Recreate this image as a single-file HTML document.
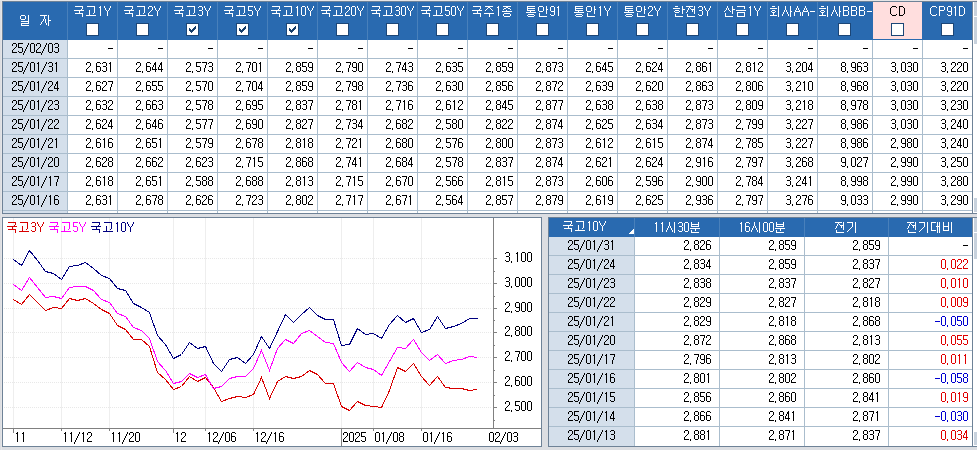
<!DOCTYPE html>
<html><head><meta charset="utf-8"><title>국고채 금리</title>
<style>html,body{margin:0;padding:0;background:#dcdee2;overflow:hidden;font-family:"Liberation Sans",sans-serif}svg{display:block;position:absolute;left:0;top:0}#t{position:absolute;left:0;top:0;width:977px;height:450px;overflow:hidden}#t span{position:absolute;font-size:11px;line-height:13px;white-space:pre;color:transparent}</style>
</head><body>
<svg width="977" height="450" viewBox="0 0 977 450" shape-rendering="crispEdges">
<defs><path id="cm" d="M0 9h1v1h-1zM0 10h1v1h-1z"/><path id="dash" d="M0 5h5v1h-5z"/><path id="sl" d="M4 0h1v1h-1zM4 1h1v1h-1zM3 2h1v1h-1zM3 3h1v1h-1zM2 4h1v1h-1zM2 5h1v1h-1zM1 6h1v1h-1zM1 7h1v1h-1zM0 8h1v1h-1zM0 9h1v1h-1zM-1 10h1v1h-1zM-1 11h1v1h-1z"/><path id="u0030" d="M1 0h3v1h-3zM0 1h1v1h-1zM4 1h1v1h-1zM0 2h1v1h-1zM4 2h1v1h-1zM0 3h1v1h-1zM4 3h1v1h-1zM0 4h1v1h-1zM4 4h1v1h-1zM0 5h1v1h-1zM4 5h1v1h-1zM0 6h1v1h-1zM4 6h1v1h-1zM0 7h1v1h-1zM4 7h1v1h-1zM0 8h1v1h-1zM4 8h1v1h-1zM1 9h3v1h-3z"/><path id="u0031" d="M2 0h1v1h-1zM1 1h2v1h-2zM2 2h1v1h-1zM2 3h1v1h-1zM2 4h1v1h-1zM2 5h1v1h-1zM2 6h1v1h-1zM2 7h1v1h-1zM2 8h1v1h-1zM2 9h1v1h-1z"/><path id="u0032" d="M1 0h3v1h-3zM0 1h1v1h-1zM4 1h1v1h-1zM0 2h1v1h-1zM4 2h1v1h-1zM4 3h1v1h-1zM3 4h1v1h-1zM2 5h1v1h-1zM1 6h1v1h-1zM0 7h1v1h-1zM0 8h1v1h-1zM0 9h5v1h-5z"/><path id="u0033" d="M1 0h3v1h-3zM0 1h1v1h-1zM4 1h1v1h-1zM4 2h1v1h-1zM4 3h1v1h-1zM1 4h3v1h-3zM4 5h1v1h-1zM4 6h1v1h-1zM4 7h1v1h-1zM0 8h1v1h-1zM4 8h1v1h-1zM1 9h3v1h-3z"/><path id="u0034" d="M3 0h1v1h-1zM2 1h2v1h-2zM2 2h2v1h-2zM1 3h1v1h-1zM3 3h1v1h-1zM1 4h1v1h-1zM3 4h1v1h-1zM0 5h1v1h-1zM3 5h1v1h-1zM0 6h1v1h-1zM3 6h1v1h-1zM0 7h5v1h-5zM3 8h1v1h-1zM3 9h1v1h-1z"/><path id="u0035" d="M0 0h5v1h-5zM0 1h1v1h-1zM0 2h1v1h-1zM0 3h1v1h-1zM0 4h4v1h-4zM4 5h1v1h-1zM4 6h1v1h-1zM4 7h1v1h-1zM0 8h1v1h-1zM4 8h1v1h-1zM1 9h3v1h-3z"/><path id="u0036" d="M1 0h3v1h-3zM0 1h1v1h-1zM4 1h1v1h-1zM0 2h1v1h-1zM0 3h1v1h-1zM0 4h4v1h-4zM0 5h1v1h-1zM4 5h1v1h-1zM0 6h1v1h-1zM4 6h1v1h-1zM0 7h1v1h-1zM4 7h1v1h-1zM0 8h1v1h-1zM4 8h1v1h-1zM1 9h3v1h-3z"/><path id="u0037" d="M0 0h5v1h-5zM4 1h1v1h-1zM4 2h1v1h-1zM3 3h1v1h-1zM3 4h1v1h-1zM3 5h1v1h-1zM2 6h1v1h-1zM2 7h1v1h-1zM2 8h1v1h-1zM2 9h1v1h-1z"/><path id="u0038" d="M1 0h3v1h-3zM0 1h1v1h-1zM4 1h1v1h-1zM0 2h1v1h-1zM4 2h1v1h-1zM0 3h1v1h-1zM4 3h1v1h-1zM1 4h3v1h-3zM0 5h1v1h-1zM4 5h1v1h-1zM0 6h1v1h-1zM4 6h1v1h-1zM0 7h1v1h-1zM4 7h1v1h-1zM0 8h1v1h-1zM4 8h1v1h-1zM1 9h3v1h-3z"/><path id="u0039" d="M1 0h3v1h-3zM0 1h1v1h-1zM4 1h1v1h-1zM0 2h1v1h-1zM4 2h1v1h-1zM0 3h1v1h-1zM4 3h1v1h-1zM0 4h1v1h-1zM4 4h1v1h-1zM1 5h4v1h-4zM4 6h1v1h-1zM4 7h1v1h-1zM0 8h1v1h-1zM4 8h1v1h-1zM1 9h3v1h-3z"/><path id="u0041" d="M3 0h1v1h-1zM3 1h1v1h-1zM2 2h1v1h-1zM4 2h1v1h-1zM2 3h1v1h-1zM4 3h1v1h-1zM1 4h1v1h-1zM5 4h1v1h-1zM1 5h5v1h-5zM0 6h1v1h-1zM6 6h1v1h-1zM0 7h1v1h-1zM6 7h1v1h-1zM0 8h1v1h-1zM6 8h1v1h-1zM0 9h1v1h-1zM6 9h1v1h-1z"/><path id="u0042" d="M0 0h5v1h-5zM0 1h1v1h-1zM5 1h1v1h-1zM0 2h1v1h-1zM5 2h1v1h-1zM0 3h1v1h-1zM5 3h1v1h-1zM0 4h5v1h-5zM0 5h1v1h-1zM5 5h1v1h-1zM0 6h1v1h-1zM5 6h1v1h-1zM0 7h1v1h-1zM5 7h1v1h-1zM0 8h1v1h-1zM5 8h1v1h-1zM0 9h5v1h-5z"/><path id="u0043" d="M2 0h4v1h-4zM1 1h1v1h-1zM6 1h1v1h-1zM0 2h1v1h-1zM0 3h1v1h-1zM0 4h1v1h-1zM0 5h1v1h-1zM0 6h1v1h-1zM0 7h1v1h-1zM1 8h1v1h-1zM6 8h1v1h-1zM2 9h4v1h-4z"/><path id="u0044" d="M0 0h4v1h-4zM0 1h1v1h-1zM4 1h1v1h-1zM0 2h1v1h-1zM5 2h1v1h-1zM0 3h1v1h-1zM5 3h1v1h-1zM0 4h1v1h-1zM5 4h1v1h-1zM0 5h1v1h-1zM5 5h1v1h-1zM0 6h1v1h-1zM5 6h1v1h-1zM0 7h1v1h-1zM5 7h1v1h-1zM0 8h1v1h-1zM4 8h1v1h-1zM0 9h4v1h-4z"/><path id="u0050" d="M0 0h5v1h-5zM0 1h1v1h-1zM5 1h1v1h-1zM0 2h1v1h-1zM5 2h1v1h-1zM0 3h1v1h-1zM5 3h1v1h-1zM0 4h5v1h-5zM0 5h1v1h-1zM0 6h1v1h-1zM0 7h1v1h-1zM0 8h1v1h-1zM0 9h1v1h-1z"/><path id="u0059" d="M0 0h1v1h-1zM6 0h1v1h-1zM0 1h1v1h-1zM6 1h1v1h-1zM1 2h1v1h-1zM5 2h1v1h-1zM1 3h1v1h-1zM5 3h1v1h-1zM2 4h1v1h-1zM4 4h1v1h-1zM3 5h1v1h-1zM3 6h1v1h-1zM3 7h1v1h-1zM3 8h1v1h-1zM3 9h1v1h-1z"/><path id="uace0" d="M1 0h8v1h-8zM8 1h1v1h-1zM8 2h1v1h-1zM8 3h1v1h-1zM3 4h1v1h-1zM8 4h1v1h-1zM3 5h1v1h-1zM8 5h1v1h-1zM3 6h1v1h-1zM8 6h1v1h-1zM3 7h1v1h-1zM7 7h1v1h-1zM3 8h1v1h-1zM0 9h10v1h-10z"/><path id="uad6d" d="M1 0h8v1h-8zM8 1h1v1h-1zM8 2h1v1h-1zM7 3h1v1h-1zM0 4h10v1h-10zM5 5h1v1h-1zM5 6h1v1h-1zM1 7h8v1h-8zM8 8h1v1h-1zM8 9h1v1h-1zM8 10h1v1h-1z"/><path id="uae08" d="M1 0h8v1h-8zM8 1h1v1h-1zM8 2h1v1h-1zM0 4h10v1h-10zM1 6h8v1h-8zM1 7h1v1h-1zM8 7h1v1h-1zM1 8h1v1h-1zM8 8h1v1h-1zM1 9h1v1h-1zM8 9h1v1h-1zM1 10h8v1h-8z"/><path id="uae30" d="M0 0h6v1h-6zM8 0h1v1h-1zM5 1h1v1h-1zM8 1h1v1h-1zM5 2h1v1h-1zM8 2h1v1h-1zM5 3h1v1h-1zM8 3h1v1h-1zM5 4h1v1h-1zM8 4h1v1h-1zM4 5h1v1h-1zM8 5h1v1h-1zM3 6h1v1h-1zM8 6h1v1h-1zM2 7h1v1h-1zM8 7h1v1h-1zM1 8h1v1h-1zM8 8h1v1h-1zM0 9h1v1h-1zM8 9h1v1h-1zM8 10h1v1h-1z"/><path id="ub300" d="M0 0h5v1h-5zM6 0h1v1h-1zM8 0h1v1h-1zM0 1h1v1h-1zM6 1h1v1h-1zM8 1h1v1h-1zM0 2h1v1h-1zM6 2h1v1h-1zM8 2h1v1h-1zM0 3h1v1h-1zM6 3h1v1h-1zM8 3h1v1h-1zM0 4h1v1h-1zM5 4h4v1h-4zM0 5h1v1h-1zM6 5h1v1h-1zM8 5h1v1h-1zM0 6h1v1h-1zM6 6h1v1h-1zM8 6h1v1h-1zM0 7h1v1h-1zM6 7h1v1h-1zM8 7h1v1h-1zM0 8h5v1h-5zM6 8h1v1h-1zM8 8h1v1h-1zM6 9h1v1h-1zM8 9h1v1h-1zM6 10h1v1h-1zM8 10h1v1h-1z"/><path id="ubd84" d="M1 0h1v1h-1zM8 0h1v1h-1zM1 1h1v1h-1zM8 1h1v1h-1zM1 2h8v1h-8zM1 3h1v1h-1zM8 3h1v1h-1zM1 4h8v1h-8zM0 6h10v1h-10zM5 7h1v1h-1zM1 8h1v1h-1zM5 8h1v1h-1zM1 9h1v1h-1zM1 10h8v1h-8z"/><path id="ube44" d="M0 0h1v1h-1zM5 0h1v1h-1zM8 0h1v1h-1zM0 1h1v1h-1zM5 1h1v1h-1zM8 1h1v1h-1zM0 2h1v1h-1zM5 2h1v1h-1zM8 2h1v1h-1zM0 3h1v1h-1zM5 3h1v1h-1zM8 3h1v1h-1zM0 4h6v1h-6zM8 4h1v1h-1zM0 5h1v1h-1zM5 5h1v1h-1zM8 5h1v1h-1zM0 6h1v1h-1zM5 6h1v1h-1zM8 6h1v1h-1zM0 7h1v1h-1zM5 7h1v1h-1zM8 7h1v1h-1zM0 8h6v1h-6zM8 8h1v1h-1zM8 9h1v1h-1zM8 10h1v1h-1z"/><path id="uc0ac" d="M3 0h1v1h-1zM8 0h1v1h-1zM3 1h1v1h-1zM8 1h1v1h-1zM3 2h1v1h-1zM8 2h1v1h-1zM3 3h1v1h-1zM8 3h1v1h-1zM2 4h1v1h-1zM4 4h1v1h-1zM8 4h1v1h-1zM2 5h1v1h-1zM4 5h1v1h-1zM8 5h2v1h-2zM1 6h1v1h-1zM5 6h1v1h-1zM8 6h1v1h-1zM1 7h1v1h-1zM5 7h1v1h-1zM8 7h1v1h-1zM0 8h1v1h-1zM6 8h1v1h-1zM8 8h1v1h-1zM0 9h1v1h-1zM6 9h1v1h-1zM8 9h1v1h-1zM8 10h1v1h-1z"/><path id="uc0b0" d="M3 0h1v1h-1zM8 0h1v1h-1zM3 1h1v1h-1zM8 1h1v1h-1zM2 2h1v1h-1zM4 2h1v1h-1zM8 2h1v1h-1zM2 3h1v1h-1zM4 3h1v1h-1zM8 3h3v1h-3zM1 4h1v1h-1zM5 4h1v1h-1zM8 4h1v1h-1zM0 5h1v1h-1zM6 5h1v1h-1zM8 5h1v1h-1zM8 6h1v1h-1zM1 7h1v1h-1zM8 7h1v1h-1zM1 8h1v1h-1zM1 9h1v1h-1zM1 10h8v1h-8z"/><path id="uc2dc" d="M3 0h1v1h-1zM8 0h1v1h-1zM3 1h1v1h-1zM8 1h1v1h-1zM3 2h1v1h-1zM8 2h1v1h-1zM3 3h1v1h-1zM8 3h1v1h-1zM2 4h1v1h-1zM4 4h1v1h-1zM8 4h1v1h-1zM2 5h1v1h-1zM4 5h1v1h-1zM8 5h1v1h-1zM1 6h1v1h-1zM5 6h1v1h-1zM8 6h1v1h-1zM1 7h1v1h-1zM5 7h1v1h-1zM8 7h1v1h-1zM0 8h1v1h-1zM6 8h1v1h-1zM8 8h1v1h-1zM0 9h1v1h-1zM6 9h1v1h-1zM8 9h1v1h-1zM8 10h1v1h-1z"/><path id="uc548" d="M1 0h4v1h-4zM8 0h1v1h-1zM0 1h1v1h-1zM5 1h1v1h-1zM8 1h1v1h-1zM0 2h1v1h-1zM5 2h1v1h-1zM8 2h1v1h-1zM0 3h1v1h-1zM5 3h1v1h-1zM8 3h2v1h-2zM0 4h1v1h-1zM5 4h1v1h-1zM8 4h1v1h-1zM1 5h4v1h-4zM8 5h1v1h-1zM8 6h1v1h-1zM1 7h1v1h-1zM8 7h1v1h-1zM1 8h1v1h-1zM1 9h1v1h-1zM1 10h8v1h-8z"/><path id="uc77c" d="M1 0h4v1h-4zM8 0h1v1h-1zM0 1h1v1h-1zM5 1h1v1h-1zM8 1h1v1h-1zM0 2h1v1h-1zM5 2h1v1h-1zM8 2h1v1h-1zM0 3h1v1h-1zM5 3h1v1h-1zM8 3h1v1h-1zM1 4h4v1h-4zM8 4h1v1h-1zM8 5h1v1h-1zM1 6h8v1h-8zM8 7h1v1h-1zM1 8h8v1h-8zM1 9h1v1h-1zM1 10h8v1h-8z"/><path id="uc790" d="M0 0h7v1h-7zM8 0h1v1h-1zM4 1h1v1h-1zM8 1h1v1h-1zM4 2h1v1h-1zM8 2h1v1h-1zM4 3h1v1h-1zM8 3h1v1h-1zM3 4h1v1h-1zM5 4h1v1h-1zM8 4h1v1h-1zM3 5h1v1h-1zM5 5h1v1h-1zM8 5h3v1h-3zM2 6h1v1h-1zM5 6h1v1h-1zM8 6h1v1h-1zM1 7h1v1h-1zM5 7h1v1h-1zM8 7h1v1h-1zM1 8h1v1h-1zM6 8h1v1h-1zM8 8h1v1h-1zM0 9h1v1h-1zM6 9h1v1h-1zM8 9h1v1h-1zM8 10h1v1h-1z"/><path id="uc804" d="M0 0h7v1h-7zM8 0h1v1h-1zM3 1h1v1h-1zM8 1h1v1h-1zM2 2h1v1h-1zM4 2h1v1h-1zM8 2h1v1h-1zM2 3h1v1h-1zM5 3h4v1h-4zM1 4h1v1h-1zM6 4h1v1h-1zM8 4h1v1h-1zM1 5h1v1h-1zM6 5h1v1h-1zM8 5h1v1h-1zM0 6h1v1h-1zM8 6h1v1h-1zM8 7h1v1h-1zM1 8h1v1h-1zM1 9h1v1h-1zM1 10h8v1h-8z"/><path id="uc885" d="M1 0h8v1h-8zM4 1h2v1h-2zM2 2h2v1h-2zM6 2h2v1h-2zM1 3h1v1h-1zM8 3h1v1h-1zM4 4h1v1h-1zM0 5h10v1h-10zM2 7h6v1h-6zM1 8h1v1h-1zM8 8h1v1h-1zM1 9h1v1h-1zM8 9h1v1h-1zM2 10h6v1h-6z"/><path id="uc8fc" d="M1 0h8v1h-8zM4 1h2v1h-2zM3 2h1v1h-1zM6 2h1v1h-1zM2 3h1v1h-1zM7 3h1v1h-1zM1 4h1v1h-1zM8 4h1v1h-1zM0 7h10v1h-10zM5 8h1v1h-1zM5 9h1v1h-1zM5 10h1v1h-1z"/><path id="ud1b5" d="M1 0h8v1h-8zM1 1h1v1h-1zM1 2h8v1h-8zM1 3h1v1h-1zM1 4h8v1h-8zM4 5h1v1h-1zM0 6h10v1h-10zM2 8h6v1h-6zM1 9h1v1h-1zM8 9h1v1h-1zM2 10h6v1h-6z"/><path id="ud55c" d="M1 0h3v1h-3zM8 0h1v1h-1zM8 1h1v1h-1zM-1 2h7v1h-7zM8 2h1v1h-1zM8 3h3v1h-3zM1 4h4v1h-4zM8 4h1v1h-1zM0 5h1v1h-1zM5 5h1v1h-1zM8 5h1v1h-1zM1 6h4v1h-4zM8 6h1v1h-1zM8 7h1v1h-1zM1 8h1v1h-1zM1 9h1v1h-1zM1 10h8v1h-8z"/><path id="ud68c" d="M2 0h3v1h-3zM8 0h1v1h-1zM8 1h1v1h-1zM0 2h7v1h-7zM8 2h1v1h-1zM8 3h1v1h-1zM2 4h3v1h-3zM8 4h1v1h-1zM1 5h1v1h-1zM5 5h1v1h-1zM8 5h1v1h-1zM2 6h3v1h-3zM8 6h1v1h-1zM3 7h1v1h-1zM8 7h1v1h-1zM3 8h1v1h-1zM8 8h1v1h-1zM0 9h7v1h-7zM8 9h1v1h-1zM8 10h1v1h-1z"/></defs>
<rect x="0" y="0" width="977" height="450" fill="#dcdee2"/><rect x="1" y="0" width="1" height="450" fill="#e5e5e7"/><rect x="0" y="0" width="977" height="1" fill="#e5e5e7"/><rect x="2" y="1" width="1" height="213" fill="#6e8297"/><rect x="2" y="1" width="975" height="1" fill="#6e8297"/><rect x="2" y="213" width="975" height="1" fill="#6e8297"/><rect x="3" y="2" width="969" height="38" fill="#296ab0"/><rect x="873" y="2" width="49" height="37" fill="#ffdede"/><rect x="67" y="2" width="1" height="38" fill="#4880bb"/><rect x="117" y="2" width="1" height="38" fill="#4880bb"/><rect x="167" y="2" width="1" height="38" fill="#4880bb"/><rect x="217" y="2" width="1" height="38" fill="#4880bb"/><rect x="267" y="2" width="1" height="38" fill="#4880bb"/><rect x="317" y="2" width="1" height="38" fill="#4880bb"/><rect x="367" y="2" width="1" height="38" fill="#4880bb"/><rect x="417" y="2" width="1" height="38" fill="#4880bb"/><rect x="467" y="2" width="1" height="38" fill="#4880bb"/><rect x="517" y="2" width="1" height="38" fill="#4880bb"/><rect x="567" y="2" width="1" height="38" fill="#4880bb"/><rect x="617" y="2" width="1" height="38" fill="#4880bb"/><rect x="667" y="2" width="1" height="38" fill="#4880bb"/><rect x="717" y="2" width="1" height="38" fill="#4880bb"/><rect x="767" y="2" width="1" height="38" fill="#4880bb"/><rect x="817" y="2" width="1" height="38" fill="#4880bb"/><rect x="3" y="40" width="64" height="173" fill="#d4dfeb"/><rect x="68" y="40" width="904" height="173" fill="#ffffff"/><rect x="3" y="58" width="969" height="1" fill="#aabdcd"/><rect x="3" y="77" width="969" height="1" fill="#aabdcd"/><rect x="3" y="96" width="969" height="1" fill="#aabdcd"/><rect x="3" y="115" width="969" height="1" fill="#aabdcd"/><rect x="3" y="134" width="969" height="1" fill="#aabdcd"/><rect x="3" y="153" width="969" height="1" fill="#aabdcd"/><rect x="3" y="172" width="969" height="1" fill="#aabdcd"/><rect x="3" y="191" width="969" height="1" fill="#aabdcd"/><rect x="3" y="210" width="969" height="1" fill="#aabdcd"/><rect x="67" y="40" width="1" height="173" fill="#aabdcd"/><rect x="117" y="40" width="1" height="173" fill="#aabdcd"/><rect x="167" y="40" width="1" height="173" fill="#aabdcd"/><rect x="217" y="40" width="1" height="173" fill="#aabdcd"/><rect x="267" y="40" width="1" height="173" fill="#aabdcd"/><rect x="317" y="40" width="1" height="173" fill="#aabdcd"/><rect x="367" y="40" width="1" height="173" fill="#aabdcd"/><rect x="417" y="40" width="1" height="173" fill="#aabdcd"/><rect x="467" y="40" width="1" height="173" fill="#aabdcd"/><rect x="517" y="40" width="1" height="173" fill="#aabdcd"/><rect x="567" y="40" width="1" height="173" fill="#aabdcd"/><rect x="617" y="40" width="1" height="173" fill="#aabdcd"/><rect x="667" y="40" width="1" height="173" fill="#aabdcd"/><rect x="717" y="40" width="1" height="173" fill="#aabdcd"/><rect x="767" y="40" width="1" height="173" fill="#aabdcd"/><rect x="817" y="40" width="1" height="173" fill="#aabdcd"/><rect x="872" y="40" width="1" height="173" fill="#aabdcd"/><rect x="922" y="40" width="1" height="173" fill="#aabdcd"/><rect x="972" y="2" width="1" height="212" fill="#6e8297"/><rect x="973" y="2" width="4" height="211" fill="#ffffff"/><rect x="973" y="2" width="1" height="211" fill="#ffffff"/><rect x="974" y="2" width="3" height="14" fill="#c8d2dd"/><rect x="974" y="17" width="3" height="27" fill="#c8d2dd"/><rect x="974" y="198" width="3" height="14" fill="#c8d2dd"/><rect x="86" y="23" width="13" height="13" fill="#1b4677"/><rect x="87" y="24" width="11" height="11" fill="#fff"/><rect x="136" y="23" width="13" height="13" fill="#1b4677"/><rect x="137" y="24" width="11" height="11" fill="#fff"/><rect x="186" y="23" width="13" height="13" fill="#1b4677"/><rect x="187" y="24" width="11" height="11" fill="#fff"/><rect x="195" y="26" width="1" height="1" fill="#173e6a"/><rect x="194" y="27" width="1" height="1" fill="#173e6a"/><rect x="195" y="27" width="1" height="1" fill="#173e6a"/><rect x="189" y="28" width="1" height="1" fill="#173e6a"/><rect x="193" y="28" width="1" height="1" fill="#173e6a"/><rect x="194" y="28" width="1" height="1" fill="#173e6a"/><rect x="195" y="28" width="1" height="1" fill="#173e6a"/><rect x="189" y="29" width="1" height="1" fill="#173e6a"/><rect x="190" y="29" width="1" height="1" fill="#173e6a"/><rect x="192" y="29" width="1" height="1" fill="#173e6a"/><rect x="193" y="29" width="1" height="1" fill="#173e6a"/><rect x="194" y="29" width="1" height="1" fill="#173e6a"/><rect x="189" y="30" width="1" height="1" fill="#173e6a"/><rect x="190" y="30" width="1" height="1" fill="#173e6a"/><rect x="191" y="30" width="1" height="1" fill="#173e6a"/><rect x="192" y="30" width="1" height="1" fill="#173e6a"/><rect x="193" y="30" width="1" height="1" fill="#173e6a"/><rect x="190" y="31" width="1" height="1" fill="#173e6a"/><rect x="191" y="31" width="1" height="1" fill="#173e6a"/><rect x="192" y="31" width="1" height="1" fill="#173e6a"/><rect x="191" y="32" width="1" height="1" fill="#173e6a"/><rect x="236" y="23" width="13" height="13" fill="#1b4677"/><rect x="237" y="24" width="11" height="11" fill="#fff"/><rect x="245" y="26" width="1" height="1" fill="#173e6a"/><rect x="244" y="27" width="1" height="1" fill="#173e6a"/><rect x="245" y="27" width="1" height="1" fill="#173e6a"/><rect x="239" y="28" width="1" height="1" fill="#173e6a"/><rect x="243" y="28" width="1" height="1" fill="#173e6a"/><rect x="244" y="28" width="1" height="1" fill="#173e6a"/><rect x="245" y="28" width="1" height="1" fill="#173e6a"/><rect x="239" y="29" width="1" height="1" fill="#173e6a"/><rect x="240" y="29" width="1" height="1" fill="#173e6a"/><rect x="242" y="29" width="1" height="1" fill="#173e6a"/><rect x="243" y="29" width="1" height="1" fill="#173e6a"/><rect x="244" y="29" width="1" height="1" fill="#173e6a"/><rect x="239" y="30" width="1" height="1" fill="#173e6a"/><rect x="240" y="30" width="1" height="1" fill="#173e6a"/><rect x="241" y="30" width="1" height="1" fill="#173e6a"/><rect x="242" y="30" width="1" height="1" fill="#173e6a"/><rect x="243" y="30" width="1" height="1" fill="#173e6a"/><rect x="240" y="31" width="1" height="1" fill="#173e6a"/><rect x="241" y="31" width="1" height="1" fill="#173e6a"/><rect x="242" y="31" width="1" height="1" fill="#173e6a"/><rect x="241" y="32" width="1" height="1" fill="#173e6a"/><rect x="286" y="23" width="13" height="13" fill="#1b4677"/><rect x="287" y="24" width="11" height="11" fill="#fff"/><rect x="295" y="26" width="1" height="1" fill="#173e6a"/><rect x="294" y="27" width="1" height="1" fill="#173e6a"/><rect x="295" y="27" width="1" height="1" fill="#173e6a"/><rect x="289" y="28" width="1" height="1" fill="#173e6a"/><rect x="293" y="28" width="1" height="1" fill="#173e6a"/><rect x="294" y="28" width="1" height="1" fill="#173e6a"/><rect x="295" y="28" width="1" height="1" fill="#173e6a"/><rect x="289" y="29" width="1" height="1" fill="#173e6a"/><rect x="290" y="29" width="1" height="1" fill="#173e6a"/><rect x="292" y="29" width="1" height="1" fill="#173e6a"/><rect x="293" y="29" width="1" height="1" fill="#173e6a"/><rect x="294" y="29" width="1" height="1" fill="#173e6a"/><rect x="289" y="30" width="1" height="1" fill="#173e6a"/><rect x="290" y="30" width="1" height="1" fill="#173e6a"/><rect x="291" y="30" width="1" height="1" fill="#173e6a"/><rect x="292" y="30" width="1" height="1" fill="#173e6a"/><rect x="293" y="30" width="1" height="1" fill="#173e6a"/><rect x="290" y="31" width="1" height="1" fill="#173e6a"/><rect x="291" y="31" width="1" height="1" fill="#173e6a"/><rect x="292" y="31" width="1" height="1" fill="#173e6a"/><rect x="291" y="32" width="1" height="1" fill="#173e6a"/><rect x="336" y="23" width="13" height="13" fill="#1b4677"/><rect x="337" y="24" width="11" height="11" fill="#fff"/><rect x="386" y="23" width="13" height="13" fill="#1b4677"/><rect x="387" y="24" width="11" height="11" fill="#fff"/><rect x="436" y="23" width="13" height="13" fill="#1b4677"/><rect x="437" y="24" width="11" height="11" fill="#fff"/><rect x="486" y="23" width="13" height="13" fill="#1b4677"/><rect x="487" y="24" width="11" height="11" fill="#fff"/><rect x="536" y="23" width="13" height="13" fill="#1b4677"/><rect x="537" y="24" width="11" height="11" fill="#fff"/><rect x="586" y="23" width="13" height="13" fill="#1b4677"/><rect x="587" y="24" width="11" height="11" fill="#fff"/><rect x="636" y="23" width="13" height="13" fill="#1b4677"/><rect x="637" y="24" width="11" height="11" fill="#fff"/><rect x="686" y="23" width="13" height="13" fill="#1b4677"/><rect x="687" y="24" width="11" height="11" fill="#fff"/><rect x="736" y="23" width="13" height="13" fill="#1b4677"/><rect x="737" y="24" width="11" height="11" fill="#fff"/><rect x="786" y="23" width="13" height="13" fill="#1b4677"/><rect x="787" y="24" width="11" height="11" fill="#fff"/><rect x="838" y="23" width="13" height="13" fill="#1b4677"/><rect x="839" y="24" width="11" height="11" fill="#fff"/><rect x="891" y="23" width="13" height="13" fill="#1b4677"/><rect x="892" y="24" width="11" height="11" fill="#fff"/><rect x="941" y="23" width="13" height="13" fill="#1b4677"/><rect x="942" y="24" width="11" height="11" fill="#fff"/><rect x="2" y="217" width="540" height="230" fill="#6e8297"/><rect x="3" y="218" width="538" height="228" fill="#fff"/><rect x="13" y="218" width="1" height="210" fill="#eeeeee"/><rect x="61" y="218" width="1" height="210" fill="#eeeeee"/><rect x="109" y="218" width="1" height="210" fill="#eeeeee"/><rect x="173" y="218" width="1" height="210" fill="#eeeeee"/><rect x="205" y="218" width="1" height="210" fill="#eeeeee"/><rect x="253" y="218" width="1" height="210" fill="#eeeeee"/><rect x="341" y="218" width="1" height="210" fill="#eeeeee"/><rect x="373" y="218" width="1" height="210" fill="#eeeeee"/><rect x="421" y="218" width="1" height="210" fill="#eeeeee"/><path d="M4 258.5H492" stroke="#e8e8e8" stroke-width="1" stroke-dasharray="1 1"/><path d="M4 283.5H492" stroke="#e8e8e8" stroke-width="1" stroke-dasharray="1 1"/><path d="M4 308.5H492" stroke="#e8e8e8" stroke-width="1" stroke-dasharray="1 1"/><path d="M4 332.5H492" stroke="#e8e8e8" stroke-width="1" stroke-dasharray="1 1"/><path d="M4 357.5H492" stroke="#e8e8e8" stroke-width="1" stroke-dasharray="1 1"/><path d="M4 382.5H492" stroke="#e8e8e8" stroke-width="1" stroke-dasharray="1 1"/><path d="M4 407.5H492" stroke="#e8e8e8" stroke-width="1" stroke-dasharray="1 1"/><rect x="493" y="218" width="1" height="211" fill="#808080"/><rect x="3" y="428" width="538" height="1" fill="#808080"/><rect x="494" y="258" width="3" height="1" fill="#808080"/><rect x="494" y="283" width="3" height="1" fill="#808080"/><rect x="494" y="308" width="3" height="1" fill="#808080"/><rect x="494" y="332" width="3" height="1" fill="#808080"/><rect x="494" y="357" width="3" height="1" fill="#808080"/><rect x="494" y="382" width="3" height="1" fill="#808080"/><rect x="494" y="407" width="3" height="1" fill="#808080"/><rect x="494" y="271" width="1" height="1" fill="#808080"/><rect x="494" y="296" width="1" height="1" fill="#808080"/><rect x="494" y="320" width="1" height="1" fill="#808080"/><rect x="494" y="345" width="1" height="1" fill="#808080"/><rect x="494" y="370" width="1" height="1" fill="#808080"/><rect x="494" y="395" width="1" height="1" fill="#808080"/><rect x="494" y="420" width="1" height="1" fill="#808080"/><rect x="13" y="429" width="1" height="4" fill="#808080"/><rect x="61" y="429" width="1" height="2" fill="#808080"/><rect x="109" y="429" width="1" height="2" fill="#808080"/><rect x="173" y="429" width="1" height="4" fill="#808080"/><rect x="205" y="429" width="1" height="2" fill="#808080"/><rect x="253" y="429" width="1" height="2" fill="#808080"/><rect x="341" y="429" width="1" height="2" fill="#808080"/><rect x="373" y="429" width="1" height="2" fill="#808080"/><rect x="421" y="429" width="1" height="2" fill="#808080"/><rect x="341" y="429" width="1" height="17" fill="#808080"/><polyline points="13.5,299.5 21.5,304.5 29.5,294.5 37.5,302.5 45.5,310.5 53.5,307.5 61.5,308.5 69.5,298.5 77.5,300.5 85.5,298.5 93.5,303.5 101.5,309.5 109.5,313.5 117.5,325.5 125.5,329.5 133.5,339.5 141.5,339.5 149.5,346.5 157.5,372.5 165.5,379.5 173.5,389.5 181.5,386.5 189.5,376.5 197.5,381.5 205.5,377.5 213.5,387.5 221.5,401.5 229.5,398.5 237.5,396.5 245.5,397.5 253.5,394.5 261.5,377.5 269.5,398.5 277.5,381.5 285.5,376.5 293.5,378.5 301.5,376.5 309.5,370.5 317.5,374.5 325.5,383.5 333.5,383.5 341.5,406.5 349.5,410.5 357.5,401.5 365.5,405.5 373.5,406.5 381.5,407.5 389.5,390.5 397.5,367.5 405.5,371.5 413.5,363.5 421.5,376.5 429.5,385.5 437.5,376.5 445.5,387.5 453.5,388.5 461.5,388.5 469.5,390.5 477.5,389.5" fill="none" stroke="#d80000" stroke-width="1" shape-rendering="crispEdges"/><polyline points="13.5,284.5 21.5,290.5 29.5,277.5 37.5,287.5 45.5,297.5 53.5,296.5 61.5,298.5 69.5,287.5 77.5,286.5 85.5,286.5 93.5,290.5 101.5,299.5 109.5,302.5 117.5,313.5 125.5,316.5 133.5,327.5 141.5,330.5 149.5,338.5 157.5,361.5 165.5,370.5 173.5,383.5 181.5,381.5 189.5,373.5 197.5,377.5 205.5,374.5 213.5,388.5 221.5,386.5 229.5,378.5 237.5,376.5 245.5,376.5 253.5,368.5 261.5,350.5 269.5,370.5 277.5,348.5 285.5,339.5 293.5,343.5 301.5,333.5 309.5,330.5 317.5,336.5 325.5,342.5 333.5,343.5 341.5,362.5 349.5,371.5 357.5,362.5 365.5,367.5 373.5,369.5 381.5,375.5 389.5,361.5 397.5,347.5 405.5,348.5 413.5,339.5 421.5,352.5 429.5,360.5 437.5,354.5 445.5,363.5 453.5,360.5 461.5,359.5 469.5,356.5 477.5,357.5" fill="none" stroke="#ff00ff" stroke-width="1" shape-rendering="crispEdges"/><polyline points="13.5,259.5 21.5,265.5 29.5,250.5 37.5,260.5 45.5,271.5 53.5,273.5 61.5,279.5 69.5,266.5 77.5,265.5 85.5,262.5 93.5,268.5 101.5,275.5 109.5,278.5 117.5,288.5 125.5,290.5 133.5,303.5 141.5,307.5 149.5,312.5 157.5,335.5 165.5,344.5 173.5,358.5 181.5,354.5 189.5,342.5 197.5,348.5 205.5,346.5 213.5,363.5 221.5,371.5 229.5,359.5 237.5,357.5 245.5,363.5 253.5,354.5 261.5,336.5 269.5,348.5 277.5,331.5 285.5,314.5 293.5,322.5 301.5,314.5 309.5,307.5 317.5,315.5 325.5,319.5 333.5,319.5 341.5,345.5 349.5,344.5 357.5,328.5 365.5,334.5 373.5,333.5 381.5,338.5 389.5,324.5 397.5,315.5 405.5,322.5 413.5,318.5 421.5,332.5 429.5,329.5 437.5,316.5 445.5,328.5 453.5,326.5 461.5,323.5 469.5,318.5 477.5,318.5" fill="none" stroke="#000080" stroke-width="1" shape-rendering="crispEdges"/><rect x="548" y="217" width="429" height="230" fill="#6e8297"/><rect x="549" y="218" width="423" height="19" fill="#296ab0"/><rect x="634" y="218" width="1" height="19" fill="#4880bb"/><rect x="719" y="218" width="1" height="19" fill="#4880bb"/><rect x="804" y="218" width="1" height="19" fill="#4880bb"/><rect x="888" y="218" width="1" height="19" fill="#4880bb"/><rect x="549" y="237" width="85" height="209" fill="#d4dfeb"/><rect x="635" y="237" width="337" height="209" fill="#fff"/><rect x="549" y="255" width="423" height="1" fill="#aabdcd"/><rect x="549" y="274" width="423" height="1" fill="#aabdcd"/><rect x="549" y="293" width="423" height="1" fill="#aabdcd"/><rect x="549" y="312" width="423" height="1" fill="#aabdcd"/><rect x="549" y="331" width="423" height="1" fill="#aabdcd"/><rect x="549" y="350" width="423" height="1" fill="#aabdcd"/><rect x="549" y="369" width="423" height="1" fill="#aabdcd"/><rect x="549" y="388" width="423" height="1" fill="#aabdcd"/><rect x="549" y="407" width="423" height="1" fill="#aabdcd"/><rect x="549" y="426" width="423" height="1" fill="#aabdcd"/><rect x="634" y="237" width="1" height="209" fill="#aabdcd"/><rect x="719" y="237" width="1" height="209" fill="#aabdcd"/><rect x="804" y="237" width="1" height="209" fill="#aabdcd"/><rect x="888" y="237" width="1" height="209" fill="#aabdcd"/><rect x="973" y="218" width="4" height="228" fill="#ffffff"/><rect x="974" y="218" width="3" height="14" fill="#c8d2dd"/><rect x="974" y="233" width="3" height="26" fill="#c8d2dd"/><rect x="974" y="432" width="3" height="13" fill="#c8d2dd"/><rect x="633" y="229" width="1" height="1" fill="#fff"/><rect x="632" y="230" width="2" height="1" fill="#fff"/><rect x="631" y="231" width="3" height="1" fill="#fff"/><rect x="630" y="232" width="4" height="1" fill="#fff"/><rect x="629" y="233" width="5" height="1" fill="#fff"/>
<g fill="#fff"><use href="#uc77c" x="20" y="15"/><use href="#uc790" x="40" y="15"/><use href="#uad6d" x="74" y="6"/><use href="#uace0" x="86" y="6"/><use href="#u0031" x="98" y="6"/><use href="#u0059" x="104" y="6"/><use href="#uad6d" x="124" y="6"/><use href="#uace0" x="136" y="6"/><use href="#u0032" x="148" y="6"/><use href="#u0059" x="154" y="6"/><use href="#uad6d" x="174" y="6"/><use href="#uace0" x="186" y="6"/><use href="#u0033" x="198" y="6"/><use href="#u0059" x="204" y="6"/><use href="#uad6d" x="224" y="6"/><use href="#uace0" x="236" y="6"/><use href="#u0035" x="248" y="6"/><use href="#u0059" x="254" y="6"/><use href="#uad6d" x="271" y="6"/><use href="#uace0" x="283" y="6"/><use href="#u0031" x="295" y="6"/><use href="#u0030" x="301" y="6"/><use href="#u0059" x="307" y="6"/><use href="#uad6d" x="321" y="6"/><use href="#uace0" x="333" y="6"/><use href="#u0032" x="345" y="6"/><use href="#u0030" x="351" y="6"/><use href="#u0059" x="357" y="6"/><use href="#uad6d" x="371" y="6"/><use href="#uace0" x="383" y="6"/><use href="#u0033" x="395" y="6"/><use href="#u0030" x="401" y="6"/><use href="#u0059" x="407" y="6"/><use href="#uad6d" x="421" y="6"/><use href="#uace0" x="433" y="6"/><use href="#u0035" x="445" y="6"/><use href="#u0030" x="451" y="6"/><use href="#u0059" x="457" y="6"/><use href="#uad6d" x="472" y="6"/><use href="#uc8fc" x="484" y="6"/><use href="#u0031" x="496" y="6"/><use href="#uc885" x="502" y="6"/><use href="#ud1b5" x="526" y="6"/><use href="#uc548" x="538" y="6"/><use href="#u0039" x="550" y="6"/><use href="#u0031" x="556" y="6"/><use href="#ud1b5" x="574" y="6"/><use href="#uc548" x="586" y="6"/><use href="#u0031" x="598" y="6"/><use href="#u0059" x="604" y="6"/><use href="#ud1b5" x="624" y="6"/><use href="#uc548" x="636" y="6"/><use href="#u0032" x="648" y="6"/><use href="#u0059" x="654" y="6"/><use href="#ud55c" x="674" y="6"/><use href="#uc804" x="686" y="6"/><use href="#u0033" x="698" y="6"/><use href="#u0059" x="704" y="6"/><use href="#uc0b0" x="724" y="6"/><use href="#uae08" x="736" y="6"/><use href="#u0031" x="748" y="6"/><use href="#u0059" x="754" y="6"/><use href="#ud68c" x="770" y="6"/><use href="#uc0ac" x="782" y="6"/><use href="#u0041" x="794" y="6"/><use href="#u0041" x="802" y="6"/><use href="#dash" x="810" y="6"/><use href="#ud68c" x="819" y="6"/><use href="#uc0ac" x="831" y="6"/><use href="#u0042" x="843" y="6"/><use href="#u0042" x="851" y="6"/><use href="#u0042" x="859" y="6"/><use href="#dash" x="867" y="6"/><use href="#u0043" x="930" y="6"/><use href="#u0050" x="939" y="6"/><use href="#u0039" x="947" y="6"/><use href="#u0031" x="953" y="6"/><use href="#u0044" x="959" y="6"/><use href="#uad6d" x="563" y="221"/><use href="#uace0" x="575" y="221"/><use href="#u0031" x="587" y="221"/><use href="#u0030" x="593" y="221"/><use href="#u0059" x="599" y="221"/><use href="#u0031" x="654" y="222"/><use href="#u0031" x="660" y="222"/><use href="#uc2dc" x="666" y="222"/><use href="#u0033" x="678" y="222"/><use href="#u0030" x="684" y="222"/><use href="#ubd84" x="690" y="222"/><use href="#u0031" x="739" y="222"/><use href="#u0036" x="745" y="222"/><use href="#uc2dc" x="751" y="222"/><use href="#u0030" x="763" y="222"/><use href="#u0030" x="769" y="222"/><use href="#ubd84" x="775" y="222"/><use href="#uc804" x="835" y="222"/><use href="#uae30" x="847" y="222"/><use href="#uc804" x="907" y="222"/><use href="#uae30" x="919" y="222"/><use href="#ub300" x="931" y="222"/><use href="#ube44" x="943" y="222"/></g><g fill="#000"><use href="#u0043" x="890" y="6"/><use href="#u0044" x="899" y="6"/><use href="#u0032" x="12" y="43"/><use href="#u0035" x="18" y="43"/><use href="#sl" x="24" y="43"/><use href="#u0030" x="30" y="43"/><use href="#u0032" x="36" y="43"/><use href="#sl" x="42" y="43"/><use href="#u0030" x="48" y="43"/><use href="#u0033" x="54" y="43"/><use href="#dash" x="108" y="43"/><use href="#dash" x="158" y="43"/><use href="#dash" x="208" y="43"/><use href="#dash" x="258" y="43"/><use href="#dash" x="308" y="43"/><use href="#dash" x="358" y="43"/><use href="#dash" x="408" y="43"/><use href="#dash" x="458" y="43"/><use href="#dash" x="508" y="43"/><use href="#dash" x="558" y="43"/><use href="#dash" x="608" y="43"/><use href="#dash" x="658" y="43"/><use href="#dash" x="708" y="43"/><use href="#dash" x="758" y="43"/><use href="#dash" x="808" y="43"/><use href="#dash" x="863" y="43"/><use href="#dash" x="913" y="43"/><use href="#dash" x="963" y="43"/><use href="#u0032" x="12" y="62"/><use href="#u0035" x="18" y="62"/><use href="#sl" x="24" y="62"/><use href="#u0030" x="30" y="62"/><use href="#u0031" x="36" y="62"/><use href="#sl" x="42" y="62"/><use href="#u0033" x="48" y="62"/><use href="#u0031" x="54" y="62"/><use href="#u0032" x="86" y="62"/><use href="#cm" x="92" y="62"/><use href="#u0036" x="96" y="62"/><use href="#u0033" x="102" y="62"/><use href="#u0031" x="108" y="62"/><use href="#u0032" x="136" y="62"/><use href="#cm" x="142" y="62"/><use href="#u0036" x="146" y="62"/><use href="#u0034" x="152" y="62"/><use href="#u0034" x="158" y="62"/><use href="#u0032" x="186" y="62"/><use href="#cm" x="192" y="62"/><use href="#u0035" x="196" y="62"/><use href="#u0037" x="202" y="62"/><use href="#u0033" x="208" y="62"/><use href="#u0032" x="236" y="62"/><use href="#cm" x="242" y="62"/><use href="#u0037" x="246" y="62"/><use href="#u0030" x="252" y="62"/><use href="#u0031" x="258" y="62"/><use href="#u0032" x="286" y="62"/><use href="#cm" x="292" y="62"/><use href="#u0038" x="296" y="62"/><use href="#u0035" x="302" y="62"/><use href="#u0039" x="308" y="62"/><use href="#u0032" x="336" y="62"/><use href="#cm" x="342" y="62"/><use href="#u0037" x="346" y="62"/><use href="#u0039" x="352" y="62"/><use href="#u0030" x="358" y="62"/><use href="#u0032" x="386" y="62"/><use href="#cm" x="392" y="62"/><use href="#u0037" x="396" y="62"/><use href="#u0034" x="402" y="62"/><use href="#u0033" x="408" y="62"/><use href="#u0032" x="436" y="62"/><use href="#cm" x="442" y="62"/><use href="#u0036" x="446" y="62"/><use href="#u0033" x="452" y="62"/><use href="#u0035" x="458" y="62"/><use href="#u0032" x="486" y="62"/><use href="#cm" x="492" y="62"/><use href="#u0038" x="496" y="62"/><use href="#u0035" x="502" y="62"/><use href="#u0039" x="508" y="62"/><use href="#u0032" x="536" y="62"/><use href="#cm" x="542" y="62"/><use href="#u0038" x="546" y="62"/><use href="#u0037" x="552" y="62"/><use href="#u0033" x="558" y="62"/><use href="#u0032" x="586" y="62"/><use href="#cm" x="592" y="62"/><use href="#u0036" x="596" y="62"/><use href="#u0034" x="602" y="62"/><use href="#u0035" x="608" y="62"/><use href="#u0032" x="636" y="62"/><use href="#cm" x="642" y="62"/><use href="#u0036" x="646" y="62"/><use href="#u0032" x="652" y="62"/><use href="#u0034" x="658" y="62"/><use href="#u0032" x="686" y="62"/><use href="#cm" x="692" y="62"/><use href="#u0038" x="696" y="62"/><use href="#u0036" x="702" y="62"/><use href="#u0031" x="708" y="62"/><use href="#u0032" x="736" y="62"/><use href="#cm" x="742" y="62"/><use href="#u0038" x="746" y="62"/><use href="#u0031" x="752" y="62"/><use href="#u0032" x="758" y="62"/><use href="#u0033" x="786" y="62"/><use href="#cm" x="792" y="62"/><use href="#u0032" x="796" y="62"/><use href="#u0030" x="802" y="62"/><use href="#u0034" x="808" y="62"/><use href="#u0038" x="841" y="62"/><use href="#cm" x="847" y="62"/><use href="#u0039" x="851" y="62"/><use href="#u0036" x="857" y="62"/><use href="#u0033" x="863" y="62"/><use href="#u0033" x="891" y="62"/><use href="#cm" x="897" y="62"/><use href="#u0030" x="901" y="62"/><use href="#u0033" x="907" y="62"/><use href="#u0030" x="913" y="62"/><use href="#u0033" x="941" y="62"/><use href="#cm" x="947" y="62"/><use href="#u0032" x="951" y="62"/><use href="#u0032" x="957" y="62"/><use href="#u0030" x="963" y="62"/><use href="#u0032" x="12" y="81"/><use href="#u0035" x="18" y="81"/><use href="#sl" x="24" y="81"/><use href="#u0030" x="30" y="81"/><use href="#u0031" x="36" y="81"/><use href="#sl" x="42" y="81"/><use href="#u0032" x="48" y="81"/><use href="#u0034" x="54" y="81"/><use href="#u0032" x="86" y="81"/><use href="#cm" x="92" y="81"/><use href="#u0036" x="96" y="81"/><use href="#u0032" x="102" y="81"/><use href="#u0037" x="108" y="81"/><use href="#u0032" x="136" y="81"/><use href="#cm" x="142" y="81"/><use href="#u0036" x="146" y="81"/><use href="#u0035" x="152" y="81"/><use href="#u0035" x="158" y="81"/><use href="#u0032" x="186" y="81"/><use href="#cm" x="192" y="81"/><use href="#u0035" x="196" y="81"/><use href="#u0037" x="202" y="81"/><use href="#u0030" x="208" y="81"/><use href="#u0032" x="236" y="81"/><use href="#cm" x="242" y="81"/><use href="#u0037" x="246" y="81"/><use href="#u0030" x="252" y="81"/><use href="#u0034" x="258" y="81"/><use href="#u0032" x="286" y="81"/><use href="#cm" x="292" y="81"/><use href="#u0038" x="296" y="81"/><use href="#u0035" x="302" y="81"/><use href="#u0039" x="308" y="81"/><use href="#u0032" x="336" y="81"/><use href="#cm" x="342" y="81"/><use href="#u0037" x="346" y="81"/><use href="#u0039" x="352" y="81"/><use href="#u0038" x="358" y="81"/><use href="#u0032" x="386" y="81"/><use href="#cm" x="392" y="81"/><use href="#u0037" x="396" y="81"/><use href="#u0033" x="402" y="81"/><use href="#u0036" x="408" y="81"/><use href="#u0032" x="436" y="81"/><use href="#cm" x="442" y="81"/><use href="#u0036" x="446" y="81"/><use href="#u0033" x="452" y="81"/><use href="#u0030" x="458" y="81"/><use href="#u0032" x="486" y="81"/><use href="#cm" x="492" y="81"/><use href="#u0038" x="496" y="81"/><use href="#u0035" x="502" y="81"/><use href="#u0036" x="508" y="81"/><use href="#u0032" x="536" y="81"/><use href="#cm" x="542" y="81"/><use href="#u0038" x="546" y="81"/><use href="#u0037" x="552" y="81"/><use href="#u0032" x="558" y="81"/><use href="#u0032" x="586" y="81"/><use href="#cm" x="592" y="81"/><use href="#u0036" x="596" y="81"/><use href="#u0033" x="602" y="81"/><use href="#u0039" x="608" y="81"/><use href="#u0032" x="636" y="81"/><use href="#cm" x="642" y="81"/><use href="#u0036" x="646" y="81"/><use href="#u0032" x="652" y="81"/><use href="#u0030" x="658" y="81"/><use href="#u0032" x="686" y="81"/><use href="#cm" x="692" y="81"/><use href="#u0038" x="696" y="81"/><use href="#u0036" x="702" y="81"/><use href="#u0033" x="708" y="81"/><use href="#u0032" x="736" y="81"/><use href="#cm" x="742" y="81"/><use href="#u0038" x="746" y="81"/><use href="#u0030" x="752" y="81"/><use href="#u0036" x="758" y="81"/><use href="#u0033" x="786" y="81"/><use href="#cm" x="792" y="81"/><use href="#u0032" x="796" y="81"/><use href="#u0031" x="802" y="81"/><use href="#u0030" x="808" y="81"/><use href="#u0038" x="841" y="81"/><use href="#cm" x="847" y="81"/><use href="#u0039" x="851" y="81"/><use href="#u0036" x="857" y="81"/><use href="#u0038" x="863" y="81"/><use href="#u0033" x="891" y="81"/><use href="#cm" x="897" y="81"/><use href="#u0030" x="901" y="81"/><use href="#u0033" x="907" y="81"/><use href="#u0030" x="913" y="81"/><use href="#u0033" x="941" y="81"/><use href="#cm" x="947" y="81"/><use href="#u0032" x="951" y="81"/><use href="#u0032" x="957" y="81"/><use href="#u0030" x="963" y="81"/><use href="#u0032" x="12" y="100"/><use href="#u0035" x="18" y="100"/><use href="#sl" x="24" y="100"/><use href="#u0030" x="30" y="100"/><use href="#u0031" x="36" y="100"/><use href="#sl" x="42" y="100"/><use href="#u0032" x="48" y="100"/><use href="#u0033" x="54" y="100"/><use href="#u0032" x="86" y="100"/><use href="#cm" x="92" y="100"/><use href="#u0036" x="96" y="100"/><use href="#u0033" x="102" y="100"/><use href="#u0032" x="108" y="100"/><use href="#u0032" x="136" y="100"/><use href="#cm" x="142" y="100"/><use href="#u0036" x="146" y="100"/><use href="#u0036" x="152" y="100"/><use href="#u0033" x="158" y="100"/><use href="#u0032" x="186" y="100"/><use href="#cm" x="192" y="100"/><use href="#u0035" x="196" y="100"/><use href="#u0037" x="202" y="100"/><use href="#u0038" x="208" y="100"/><use href="#u0032" x="236" y="100"/><use href="#cm" x="242" y="100"/><use href="#u0036" x="246" y="100"/><use href="#u0039" x="252" y="100"/><use href="#u0035" x="258" y="100"/><use href="#u0032" x="286" y="100"/><use href="#cm" x="292" y="100"/><use href="#u0038" x="296" y="100"/><use href="#u0033" x="302" y="100"/><use href="#u0037" x="308" y="100"/><use href="#u0032" x="336" y="100"/><use href="#cm" x="342" y="100"/><use href="#u0037" x="346" y="100"/><use href="#u0038" x="352" y="100"/><use href="#u0031" x="358" y="100"/><use href="#u0032" x="386" y="100"/><use href="#cm" x="392" y="100"/><use href="#u0037" x="396" y="100"/><use href="#u0031" x="402" y="100"/><use href="#u0036" x="408" y="100"/><use href="#u0032" x="436" y="100"/><use href="#cm" x="442" y="100"/><use href="#u0036" x="446" y="100"/><use href="#u0031" x="452" y="100"/><use href="#u0032" x="458" y="100"/><use href="#u0032" x="486" y="100"/><use href="#cm" x="492" y="100"/><use href="#u0038" x="496" y="100"/><use href="#u0034" x="502" y="100"/><use href="#u0035" x="508" y="100"/><use href="#u0032" x="536" y="100"/><use href="#cm" x="542" y="100"/><use href="#u0038" x="546" y="100"/><use href="#u0037" x="552" y="100"/><use href="#u0037" x="558" y="100"/><use href="#u0032" x="586" y="100"/><use href="#cm" x="592" y="100"/><use href="#u0036" x="596" y="100"/><use href="#u0033" x="602" y="100"/><use href="#u0038" x="608" y="100"/><use href="#u0032" x="636" y="100"/><use href="#cm" x="642" y="100"/><use href="#u0036" x="646" y="100"/><use href="#u0033" x="652" y="100"/><use href="#u0038" x="658" y="100"/><use href="#u0032" x="686" y="100"/><use href="#cm" x="692" y="100"/><use href="#u0038" x="696" y="100"/><use href="#u0037" x="702" y="100"/><use href="#u0033" x="708" y="100"/><use href="#u0032" x="736" y="100"/><use href="#cm" x="742" y="100"/><use href="#u0038" x="746" y="100"/><use href="#u0030" x="752" y="100"/><use href="#u0039" x="758" y="100"/><use href="#u0033" x="786" y="100"/><use href="#cm" x="792" y="100"/><use href="#u0032" x="796" y="100"/><use href="#u0031" x="802" y="100"/><use href="#u0038" x="808" y="100"/><use href="#u0038" x="841" y="100"/><use href="#cm" x="847" y="100"/><use href="#u0039" x="851" y="100"/><use href="#u0037" x="857" y="100"/><use href="#u0038" x="863" y="100"/><use href="#u0033" x="891" y="100"/><use href="#cm" x="897" y="100"/><use href="#u0030" x="901" y="100"/><use href="#u0033" x="907" y="100"/><use href="#u0030" x="913" y="100"/><use href="#u0033" x="941" y="100"/><use href="#cm" x="947" y="100"/><use href="#u0032" x="951" y="100"/><use href="#u0033" x="957" y="100"/><use href="#u0030" x="963" y="100"/><use href="#u0032" x="12" y="119"/><use href="#u0035" x="18" y="119"/><use href="#sl" x="24" y="119"/><use href="#u0030" x="30" y="119"/><use href="#u0031" x="36" y="119"/><use href="#sl" x="42" y="119"/><use href="#u0032" x="48" y="119"/><use href="#u0032" x="54" y="119"/><use href="#u0032" x="86" y="119"/><use href="#cm" x="92" y="119"/><use href="#u0036" x="96" y="119"/><use href="#u0032" x="102" y="119"/><use href="#u0034" x="108" y="119"/><use href="#u0032" x="136" y="119"/><use href="#cm" x="142" y="119"/><use href="#u0036" x="146" y="119"/><use href="#u0034" x="152" y="119"/><use href="#u0036" x="158" y="119"/><use href="#u0032" x="186" y="119"/><use href="#cm" x="192" y="119"/><use href="#u0035" x="196" y="119"/><use href="#u0037" x="202" y="119"/><use href="#u0037" x="208" y="119"/><use href="#u0032" x="236" y="119"/><use href="#cm" x="242" y="119"/><use href="#u0036" x="246" y="119"/><use href="#u0039" x="252" y="119"/><use href="#u0030" x="258" y="119"/><use href="#u0032" x="286" y="119"/><use href="#cm" x="292" y="119"/><use href="#u0038" x="296" y="119"/><use href="#u0032" x="302" y="119"/><use href="#u0037" x="308" y="119"/><use href="#u0032" x="336" y="119"/><use href="#cm" x="342" y="119"/><use href="#u0037" x="346" y="119"/><use href="#u0033" x="352" y="119"/><use href="#u0034" x="358" y="119"/><use href="#u0032" x="386" y="119"/><use href="#cm" x="392" y="119"/><use href="#u0036" x="396" y="119"/><use href="#u0038" x="402" y="119"/><use href="#u0032" x="408" y="119"/><use href="#u0032" x="436" y="119"/><use href="#cm" x="442" y="119"/><use href="#u0035" x="446" y="119"/><use href="#u0038" x="452" y="119"/><use href="#u0030" x="458" y="119"/><use href="#u0032" x="486" y="119"/><use href="#cm" x="492" y="119"/><use href="#u0038" x="496" y="119"/><use href="#u0032" x="502" y="119"/><use href="#u0032" x="508" y="119"/><use href="#u0032" x="536" y="119"/><use href="#cm" x="542" y="119"/><use href="#u0038" x="546" y="119"/><use href="#u0037" x="552" y="119"/><use href="#u0034" x="558" y="119"/><use href="#u0032" x="586" y="119"/><use href="#cm" x="592" y="119"/><use href="#u0036" x="596" y="119"/><use href="#u0032" x="602" y="119"/><use href="#u0035" x="608" y="119"/><use href="#u0032" x="636" y="119"/><use href="#cm" x="642" y="119"/><use href="#u0036" x="646" y="119"/><use href="#u0033" x="652" y="119"/><use href="#u0034" x="658" y="119"/><use href="#u0032" x="686" y="119"/><use href="#cm" x="692" y="119"/><use href="#u0038" x="696" y="119"/><use href="#u0037" x="702" y="119"/><use href="#u0033" x="708" y="119"/><use href="#u0032" x="736" y="119"/><use href="#cm" x="742" y="119"/><use href="#u0037" x="746" y="119"/><use href="#u0039" x="752" y="119"/><use href="#u0039" x="758" y="119"/><use href="#u0033" x="786" y="119"/><use href="#cm" x="792" y="119"/><use href="#u0032" x="796" y="119"/><use href="#u0032" x="802" y="119"/><use href="#u0037" x="808" y="119"/><use href="#u0038" x="841" y="119"/><use href="#cm" x="847" y="119"/><use href="#u0039" x="851" y="119"/><use href="#u0038" x="857" y="119"/><use href="#u0036" x="863" y="119"/><use href="#u0033" x="891" y="119"/><use href="#cm" x="897" y="119"/><use href="#u0030" x="901" y="119"/><use href="#u0033" x="907" y="119"/><use href="#u0030" x="913" y="119"/><use href="#u0033" x="941" y="119"/><use href="#cm" x="947" y="119"/><use href="#u0032" x="951" y="119"/><use href="#u0034" x="957" y="119"/><use href="#u0030" x="963" y="119"/><use href="#u0032" x="12" y="138"/><use href="#u0035" x="18" y="138"/><use href="#sl" x="24" y="138"/><use href="#u0030" x="30" y="138"/><use href="#u0031" x="36" y="138"/><use href="#sl" x="42" y="138"/><use href="#u0032" x="48" y="138"/><use href="#u0031" x="54" y="138"/><use href="#u0032" x="86" y="138"/><use href="#cm" x="92" y="138"/><use href="#u0036" x="96" y="138"/><use href="#u0031" x="102" y="138"/><use href="#u0036" x="108" y="138"/><use href="#u0032" x="136" y="138"/><use href="#cm" x="142" y="138"/><use href="#u0036" x="146" y="138"/><use href="#u0035" x="152" y="138"/><use href="#u0031" x="158" y="138"/><use href="#u0032" x="186" y="138"/><use href="#cm" x="192" y="138"/><use href="#u0035" x="196" y="138"/><use href="#u0037" x="202" y="138"/><use href="#u0039" x="208" y="138"/><use href="#u0032" x="236" y="138"/><use href="#cm" x="242" y="138"/><use href="#u0036" x="246" y="138"/><use href="#u0037" x="252" y="138"/><use href="#u0038" x="258" y="138"/><use href="#u0032" x="286" y="138"/><use href="#cm" x="292" y="138"/><use href="#u0038" x="296" y="138"/><use href="#u0031" x="302" y="138"/><use href="#u0038" x="308" y="138"/><use href="#u0032" x="336" y="138"/><use href="#cm" x="342" y="138"/><use href="#u0037" x="346" y="138"/><use href="#u0032" x="352" y="138"/><use href="#u0031" x="358" y="138"/><use href="#u0032" x="386" y="138"/><use href="#cm" x="392" y="138"/><use href="#u0036" x="396" y="138"/><use href="#u0038" x="402" y="138"/><use href="#u0030" x="408" y="138"/><use href="#u0032" x="436" y="138"/><use href="#cm" x="442" y="138"/><use href="#u0035" x="446" y="138"/><use href="#u0037" x="452" y="138"/><use href="#u0036" x="458" y="138"/><use href="#u0032" x="486" y="138"/><use href="#cm" x="492" y="138"/><use href="#u0038" x="496" y="138"/><use href="#u0030" x="502" y="138"/><use href="#u0030" x="508" y="138"/><use href="#u0032" x="536" y="138"/><use href="#cm" x="542" y="138"/><use href="#u0038" x="546" y="138"/><use href="#u0037" x="552" y="138"/><use href="#u0033" x="558" y="138"/><use href="#u0032" x="586" y="138"/><use href="#cm" x="592" y="138"/><use href="#u0036" x="596" y="138"/><use href="#u0031" x="602" y="138"/><use href="#u0032" x="608" y="138"/><use href="#u0032" x="636" y="138"/><use href="#cm" x="642" y="138"/><use href="#u0036" x="646" y="138"/><use href="#u0031" x="652" y="138"/><use href="#u0035" x="658" y="138"/><use href="#u0032" x="686" y="138"/><use href="#cm" x="692" y="138"/><use href="#u0038" x="696" y="138"/><use href="#u0037" x="702" y="138"/><use href="#u0034" x="708" y="138"/><use href="#u0032" x="736" y="138"/><use href="#cm" x="742" y="138"/><use href="#u0037" x="746" y="138"/><use href="#u0038" x="752" y="138"/><use href="#u0035" x="758" y="138"/><use href="#u0033" x="786" y="138"/><use href="#cm" x="792" y="138"/><use href="#u0032" x="796" y="138"/><use href="#u0032" x="802" y="138"/><use href="#u0037" x="808" y="138"/><use href="#u0038" x="841" y="138"/><use href="#cm" x="847" y="138"/><use href="#u0039" x="851" y="138"/><use href="#u0038" x="857" y="138"/><use href="#u0036" x="863" y="138"/><use href="#u0032" x="891" y="138"/><use href="#cm" x="897" y="138"/><use href="#u0039" x="901" y="138"/><use href="#u0038" x="907" y="138"/><use href="#u0030" x="913" y="138"/><use href="#u0033" x="941" y="138"/><use href="#cm" x="947" y="138"/><use href="#u0032" x="951" y="138"/><use href="#u0034" x="957" y="138"/><use href="#u0030" x="963" y="138"/><use href="#u0032" x="12" y="157"/><use href="#u0035" x="18" y="157"/><use href="#sl" x="24" y="157"/><use href="#u0030" x="30" y="157"/><use href="#u0031" x="36" y="157"/><use href="#sl" x="42" y="157"/><use href="#u0032" x="48" y="157"/><use href="#u0030" x="54" y="157"/><use href="#u0032" x="86" y="157"/><use href="#cm" x="92" y="157"/><use href="#u0036" x="96" y="157"/><use href="#u0032" x="102" y="157"/><use href="#u0038" x="108" y="157"/><use href="#u0032" x="136" y="157"/><use href="#cm" x="142" y="157"/><use href="#u0036" x="146" y="157"/><use href="#u0036" x="152" y="157"/><use href="#u0032" x="158" y="157"/><use href="#u0032" x="186" y="157"/><use href="#cm" x="192" y="157"/><use href="#u0036" x="196" y="157"/><use href="#u0032" x="202" y="157"/><use href="#u0033" x="208" y="157"/><use href="#u0032" x="236" y="157"/><use href="#cm" x="242" y="157"/><use href="#u0037" x="246" y="157"/><use href="#u0031" x="252" y="157"/><use href="#u0035" x="258" y="157"/><use href="#u0032" x="286" y="157"/><use href="#cm" x="292" y="157"/><use href="#u0038" x="296" y="157"/><use href="#u0036" x="302" y="157"/><use href="#u0038" x="308" y="157"/><use href="#u0032" x="336" y="157"/><use href="#cm" x="342" y="157"/><use href="#u0037" x="346" y="157"/><use href="#u0034" x="352" y="157"/><use href="#u0031" x="358" y="157"/><use href="#u0032" x="386" y="157"/><use href="#cm" x="392" y="157"/><use href="#u0036" x="396" y="157"/><use href="#u0038" x="402" y="157"/><use href="#u0034" x="408" y="157"/><use href="#u0032" x="436" y="157"/><use href="#cm" x="442" y="157"/><use href="#u0035" x="446" y="157"/><use href="#u0037" x="452" y="157"/><use href="#u0038" x="458" y="157"/><use href="#u0032" x="486" y="157"/><use href="#cm" x="492" y="157"/><use href="#u0038" x="496" y="157"/><use href="#u0033" x="502" y="157"/><use href="#u0037" x="508" y="157"/><use href="#u0032" x="536" y="157"/><use href="#cm" x="542" y="157"/><use href="#u0038" x="546" y="157"/><use href="#u0037" x="552" y="157"/><use href="#u0034" x="558" y="157"/><use href="#u0032" x="586" y="157"/><use href="#cm" x="592" y="157"/><use href="#u0036" x="596" y="157"/><use href="#u0032" x="602" y="157"/><use href="#u0031" x="608" y="157"/><use href="#u0032" x="636" y="157"/><use href="#cm" x="642" y="157"/><use href="#u0036" x="646" y="157"/><use href="#u0032" x="652" y="157"/><use href="#u0034" x="658" y="157"/><use href="#u0032" x="686" y="157"/><use href="#cm" x="692" y="157"/><use href="#u0039" x="696" y="157"/><use href="#u0031" x="702" y="157"/><use href="#u0036" x="708" y="157"/><use href="#u0032" x="736" y="157"/><use href="#cm" x="742" y="157"/><use href="#u0037" x="746" y="157"/><use href="#u0039" x="752" y="157"/><use href="#u0037" x="758" y="157"/><use href="#u0033" x="786" y="157"/><use href="#cm" x="792" y="157"/><use href="#u0032" x="796" y="157"/><use href="#u0036" x="802" y="157"/><use href="#u0038" x="808" y="157"/><use href="#u0039" x="841" y="157"/><use href="#cm" x="847" y="157"/><use href="#u0030" x="851" y="157"/><use href="#u0032" x="857" y="157"/><use href="#u0037" x="863" y="157"/><use href="#u0032" x="891" y="157"/><use href="#cm" x="897" y="157"/><use href="#u0039" x="901" y="157"/><use href="#u0039" x="907" y="157"/><use href="#u0030" x="913" y="157"/><use href="#u0033" x="941" y="157"/><use href="#cm" x="947" y="157"/><use href="#u0032" x="951" y="157"/><use href="#u0035" x="957" y="157"/><use href="#u0030" x="963" y="157"/><use href="#u0032" x="12" y="176"/><use href="#u0035" x="18" y="176"/><use href="#sl" x="24" y="176"/><use href="#u0030" x="30" y="176"/><use href="#u0031" x="36" y="176"/><use href="#sl" x="42" y="176"/><use href="#u0031" x="48" y="176"/><use href="#u0037" x="54" y="176"/><use href="#u0032" x="86" y="176"/><use href="#cm" x="92" y="176"/><use href="#u0036" x="96" y="176"/><use href="#u0031" x="102" y="176"/><use href="#u0038" x="108" y="176"/><use href="#u0032" x="136" y="176"/><use href="#cm" x="142" y="176"/><use href="#u0036" x="146" y="176"/><use href="#u0035" x="152" y="176"/><use href="#u0031" x="158" y="176"/><use href="#u0032" x="186" y="176"/><use href="#cm" x="192" y="176"/><use href="#u0035" x="196" y="176"/><use href="#u0038" x="202" y="176"/><use href="#u0038" x="208" y="176"/><use href="#u0032" x="236" y="176"/><use href="#cm" x="242" y="176"/><use href="#u0036" x="246" y="176"/><use href="#u0038" x="252" y="176"/><use href="#u0038" x="258" y="176"/><use href="#u0032" x="286" y="176"/><use href="#cm" x="292" y="176"/><use href="#u0038" x="296" y="176"/><use href="#u0031" x="302" y="176"/><use href="#u0033" x="308" y="176"/><use href="#u0032" x="336" y="176"/><use href="#cm" x="342" y="176"/><use href="#u0037" x="346" y="176"/><use href="#u0031" x="352" y="176"/><use href="#u0035" x="358" y="176"/><use href="#u0032" x="386" y="176"/><use href="#cm" x="392" y="176"/><use href="#u0036" x="396" y="176"/><use href="#u0037" x="402" y="176"/><use href="#u0030" x="408" y="176"/><use href="#u0032" x="436" y="176"/><use href="#cm" x="442" y="176"/><use href="#u0035" x="446" y="176"/><use href="#u0036" x="452" y="176"/><use href="#u0036" x="458" y="176"/><use href="#u0032" x="486" y="176"/><use href="#cm" x="492" y="176"/><use href="#u0038" x="496" y="176"/><use href="#u0031" x="502" y="176"/><use href="#u0035" x="508" y="176"/><use href="#u0032" x="536" y="176"/><use href="#cm" x="542" y="176"/><use href="#u0038" x="546" y="176"/><use href="#u0037" x="552" y="176"/><use href="#u0033" x="558" y="176"/><use href="#u0032" x="586" y="176"/><use href="#cm" x="592" y="176"/><use href="#u0036" x="596" y="176"/><use href="#u0030" x="602" y="176"/><use href="#u0036" x="608" y="176"/><use href="#u0032" x="636" y="176"/><use href="#cm" x="642" y="176"/><use href="#u0035" x="646" y="176"/><use href="#u0039" x="652" y="176"/><use href="#u0036" x="658" y="176"/><use href="#u0032" x="686" y="176"/><use href="#cm" x="692" y="176"/><use href="#u0039" x="696" y="176"/><use href="#u0030" x="702" y="176"/><use href="#u0030" x="708" y="176"/><use href="#u0032" x="736" y="176"/><use href="#cm" x="742" y="176"/><use href="#u0037" x="746" y="176"/><use href="#u0038" x="752" y="176"/><use href="#u0034" x="758" y="176"/><use href="#u0033" x="786" y="176"/><use href="#cm" x="792" y="176"/><use href="#u0032" x="796" y="176"/><use href="#u0034" x="802" y="176"/><use href="#u0031" x="808" y="176"/><use href="#u0038" x="841" y="176"/><use href="#cm" x="847" y="176"/><use href="#u0039" x="851" y="176"/><use href="#u0039" x="857" y="176"/><use href="#u0038" x="863" y="176"/><use href="#u0032" x="891" y="176"/><use href="#cm" x="897" y="176"/><use href="#u0039" x="901" y="176"/><use href="#u0039" x="907" y="176"/><use href="#u0030" x="913" y="176"/><use href="#u0033" x="941" y="176"/><use href="#cm" x="947" y="176"/><use href="#u0032" x="951" y="176"/><use href="#u0038" x="957" y="176"/><use href="#u0030" x="963" y="176"/><use href="#u0032" x="12" y="195"/><use href="#u0035" x="18" y="195"/><use href="#sl" x="24" y="195"/><use href="#u0030" x="30" y="195"/><use href="#u0031" x="36" y="195"/><use href="#sl" x="42" y="195"/><use href="#u0031" x="48" y="195"/><use href="#u0036" x="54" y="195"/><use href="#u0032" x="86" y="195"/><use href="#cm" x="92" y="195"/><use href="#u0036" x="96" y="195"/><use href="#u0033" x="102" y="195"/><use href="#u0031" x="108" y="195"/><use href="#u0032" x="136" y="195"/><use href="#cm" x="142" y="195"/><use href="#u0036" x="146" y="195"/><use href="#u0037" x="152" y="195"/><use href="#u0038" x="158" y="195"/><use href="#u0032" x="186" y="195"/><use href="#cm" x="192" y="195"/><use href="#u0036" x="196" y="195"/><use href="#u0032" x="202" y="195"/><use href="#u0036" x="208" y="195"/><use href="#u0032" x="236" y="195"/><use href="#cm" x="242" y="195"/><use href="#u0037" x="246" y="195"/><use href="#u0032" x="252" y="195"/><use href="#u0033" x="258" y="195"/><use href="#u0032" x="286" y="195"/><use href="#cm" x="292" y="195"/><use href="#u0038" x="296" y="195"/><use href="#u0030" x="302" y="195"/><use href="#u0032" x="308" y="195"/><use href="#u0032" x="336" y="195"/><use href="#cm" x="342" y="195"/><use href="#u0037" x="346" y="195"/><use href="#u0031" x="352" y="195"/><use href="#u0037" x="358" y="195"/><use href="#u0032" x="386" y="195"/><use href="#cm" x="392" y="195"/><use href="#u0036" x="396" y="195"/><use href="#u0037" x="402" y="195"/><use href="#u0031" x="408" y="195"/><use href="#u0032" x="436" y="195"/><use href="#cm" x="442" y="195"/><use href="#u0035" x="446" y="195"/><use href="#u0036" x="452" y="195"/><use href="#u0034" x="458" y="195"/><use href="#u0032" x="486" y="195"/><use href="#cm" x="492" y="195"/><use href="#u0038" x="496" y="195"/><use href="#u0035" x="502" y="195"/><use href="#u0037" x="508" y="195"/><use href="#u0032" x="536" y="195"/><use href="#cm" x="542" y="195"/><use href="#u0038" x="546" y="195"/><use href="#u0037" x="552" y="195"/><use href="#u0039" x="558" y="195"/><use href="#u0032" x="586" y="195"/><use href="#cm" x="592" y="195"/><use href="#u0036" x="596" y="195"/><use href="#u0031" x="602" y="195"/><use href="#u0039" x="608" y="195"/><use href="#u0032" x="636" y="195"/><use href="#cm" x="642" y="195"/><use href="#u0036" x="646" y="195"/><use href="#u0032" x="652" y="195"/><use href="#u0035" x="658" y="195"/><use href="#u0032" x="686" y="195"/><use href="#cm" x="692" y="195"/><use href="#u0039" x="696" y="195"/><use href="#u0033" x="702" y="195"/><use href="#u0036" x="708" y="195"/><use href="#u0032" x="736" y="195"/><use href="#cm" x="742" y="195"/><use href="#u0037" x="746" y="195"/><use href="#u0039" x="752" y="195"/><use href="#u0037" x="758" y="195"/><use href="#u0033" x="786" y="195"/><use href="#cm" x="792" y="195"/><use href="#u0032" x="796" y="195"/><use href="#u0037" x="802" y="195"/><use href="#u0036" x="808" y="195"/><use href="#u0039" x="841" y="195"/><use href="#cm" x="847" y="195"/><use href="#u0030" x="851" y="195"/><use href="#u0033" x="857" y="195"/><use href="#u0033" x="863" y="195"/><use href="#u0032" x="891" y="195"/><use href="#cm" x="897" y="195"/><use href="#u0039" x="901" y="195"/><use href="#u0039" x="907" y="195"/><use href="#u0030" x="913" y="195"/><use href="#u0033" x="941" y="195"/><use href="#cm" x="947" y="195"/><use href="#u0032" x="951" y="195"/><use href="#u0039" x="957" y="195"/><use href="#u0030" x="963" y="195"/><use href="#u0033" x="505" y="252"/><use href="#cm" x="511" y="252"/><use href="#u0031" x="515" y="252"/><use href="#u0030" x="521" y="252"/><use href="#u0030" x="527" y="252"/><use href="#u0033" x="505" y="277"/><use href="#cm" x="511" y="277"/><use href="#u0030" x="515" y="277"/><use href="#u0030" x="521" y="277"/><use href="#u0030" x="527" y="277"/><use href="#u0032" x="505" y="302"/><use href="#cm" x="511" y="302"/><use href="#u0039" x="515" y="302"/><use href="#u0030" x="521" y="302"/><use href="#u0030" x="527" y="302"/><use href="#u0032" x="505" y="326"/><use href="#cm" x="511" y="326"/><use href="#u0038" x="515" y="326"/><use href="#u0030" x="521" y="326"/><use href="#u0030" x="527" y="326"/><use href="#u0032" x="505" y="351"/><use href="#cm" x="511" y="351"/><use href="#u0037" x="515" y="351"/><use href="#u0030" x="521" y="351"/><use href="#u0030" x="527" y="351"/><use href="#u0032" x="505" y="376"/><use href="#cm" x="511" y="376"/><use href="#u0036" x="515" y="376"/><use href="#u0030" x="521" y="376"/><use href="#u0030" x="527" y="376"/><use href="#u0032" x="505" y="401"/><use href="#cm" x="511" y="401"/><use href="#u0035" x="515" y="401"/><use href="#u0030" x="521" y="401"/><use href="#u0030" x="527" y="401"/><use href="#u0031" x="15" y="432"/><use href="#u0031" x="21" y="432"/><use href="#u0031" x="63" y="432"/><use href="#u0031" x="69" y="432"/><use href="#sl" x="75" y="432"/><use href="#u0031" x="81" y="432"/><use href="#u0032" x="87" y="432"/><use href="#u0031" x="111" y="432"/><use href="#u0031" x="117" y="432"/><use href="#sl" x="123" y="432"/><use href="#u0032" x="129" y="432"/><use href="#u0030" x="135" y="432"/><use href="#u0031" x="175" y="432"/><use href="#u0032" x="181" y="432"/><use href="#u0031" x="207" y="432"/><use href="#u0032" x="213" y="432"/><use href="#sl" x="219" y="432"/><use href="#u0030" x="225" y="432"/><use href="#u0036" x="231" y="432"/><use href="#u0031" x="255" y="432"/><use href="#u0032" x="261" y="432"/><use href="#sl" x="267" y="432"/><use href="#u0031" x="273" y="432"/><use href="#u0036" x="279" y="432"/><use href="#u0032" x="343" y="432"/><use href="#u0030" x="349" y="432"/><use href="#u0032" x="355" y="432"/><use href="#u0035" x="361" y="432"/><use href="#u0030" x="375" y="432"/><use href="#u0031" x="381" y="432"/><use href="#sl" x="387" y="432"/><use href="#u0030" x="393" y="432"/><use href="#u0038" x="399" y="432"/><use href="#u0030" x="423" y="432"/><use href="#u0031" x="429" y="432"/><use href="#sl" x="435" y="432"/><use href="#u0031" x="441" y="432"/><use href="#u0036" x="447" y="432"/><use href="#u0030" x="489" y="432"/><use href="#u0032" x="495" y="432"/><use href="#sl" x="501" y="432"/><use href="#u0030" x="507" y="432"/><use href="#u0033" x="513" y="432"/><use href="#u0032" x="568" y="240"/><use href="#u0035" x="574" y="240"/><use href="#sl" x="580" y="240"/><use href="#u0030" x="586" y="240"/><use href="#u0031" x="592" y="240"/><use href="#sl" x="598" y="240"/><use href="#u0033" x="604" y="240"/><use href="#u0031" x="610" y="240"/><use href="#u0032" x="684" y="240"/><use href="#cm" x="690" y="240"/><use href="#u0038" x="694" y="240"/><use href="#u0032" x="700" y="240"/><use href="#u0036" x="706" y="240"/><use href="#u0032" x="769" y="240"/><use href="#cm" x="775" y="240"/><use href="#u0038" x="779" y="240"/><use href="#u0035" x="785" y="240"/><use href="#u0039" x="791" y="240"/><use href="#u0032" x="853" y="240"/><use href="#cm" x="859" y="240"/><use href="#u0038" x="863" y="240"/><use href="#u0035" x="869" y="240"/><use href="#u0039" x="875" y="240"/><use href="#dash" x="963" y="240"/><use href="#u0032" x="568" y="259"/><use href="#u0035" x="574" y="259"/><use href="#sl" x="580" y="259"/><use href="#u0030" x="586" y="259"/><use href="#u0031" x="592" y="259"/><use href="#sl" x="598" y="259"/><use href="#u0032" x="604" y="259"/><use href="#u0034" x="610" y="259"/><use href="#u0032" x="684" y="259"/><use href="#cm" x="690" y="259"/><use href="#u0038" x="694" y="259"/><use href="#u0033" x="700" y="259"/><use href="#u0034" x="706" y="259"/><use href="#u0032" x="769" y="259"/><use href="#cm" x="775" y="259"/><use href="#u0038" x="779" y="259"/><use href="#u0035" x="785" y="259"/><use href="#u0039" x="791" y="259"/><use href="#u0032" x="853" y="259"/><use href="#cm" x="859" y="259"/><use href="#u0038" x="863" y="259"/><use href="#u0033" x="869" y="259"/><use href="#u0037" x="875" y="259"/><use href="#u0032" x="568" y="278"/><use href="#u0035" x="574" y="278"/><use href="#sl" x="580" y="278"/><use href="#u0030" x="586" y="278"/><use href="#u0031" x="592" y="278"/><use href="#sl" x="598" y="278"/><use href="#u0032" x="604" y="278"/><use href="#u0033" x="610" y="278"/><use href="#u0032" x="684" y="278"/><use href="#cm" x="690" y="278"/><use href="#u0038" x="694" y="278"/><use href="#u0033" x="700" y="278"/><use href="#u0038" x="706" y="278"/><use href="#u0032" x="769" y="278"/><use href="#cm" x="775" y="278"/><use href="#u0038" x="779" y="278"/><use href="#u0033" x="785" y="278"/><use href="#u0037" x="791" y="278"/><use href="#u0032" x="853" y="278"/><use href="#cm" x="859" y="278"/><use href="#u0038" x="863" y="278"/><use href="#u0032" x="869" y="278"/><use href="#u0037" x="875" y="278"/><use href="#u0032" x="568" y="297"/><use href="#u0035" x="574" y="297"/><use href="#sl" x="580" y="297"/><use href="#u0030" x="586" y="297"/><use href="#u0031" x="592" y="297"/><use href="#sl" x="598" y="297"/><use href="#u0032" x="604" y="297"/><use href="#u0032" x="610" y="297"/><use href="#u0032" x="684" y="297"/><use href="#cm" x="690" y="297"/><use href="#u0038" x="694" y="297"/><use href="#u0032" x="700" y="297"/><use href="#u0039" x="706" y="297"/><use href="#u0032" x="769" y="297"/><use href="#cm" x="775" y="297"/><use href="#u0038" x="779" y="297"/><use href="#u0032" x="785" y="297"/><use href="#u0037" x="791" y="297"/><use href="#u0032" x="853" y="297"/><use href="#cm" x="859" y="297"/><use href="#u0038" x="863" y="297"/><use href="#u0031" x="869" y="297"/><use href="#u0038" x="875" y="297"/><use href="#u0032" x="568" y="316"/><use href="#u0035" x="574" y="316"/><use href="#sl" x="580" y="316"/><use href="#u0030" x="586" y="316"/><use href="#u0031" x="592" y="316"/><use href="#sl" x="598" y="316"/><use href="#u0032" x="604" y="316"/><use href="#u0031" x="610" y="316"/><use href="#u0032" x="684" y="316"/><use href="#cm" x="690" y="316"/><use href="#u0038" x="694" y="316"/><use href="#u0032" x="700" y="316"/><use href="#u0039" x="706" y="316"/><use href="#u0032" x="769" y="316"/><use href="#cm" x="775" y="316"/><use href="#u0038" x="779" y="316"/><use href="#u0031" x="785" y="316"/><use href="#u0038" x="791" y="316"/><use href="#u0032" x="853" y="316"/><use href="#cm" x="859" y="316"/><use href="#u0038" x="863" y="316"/><use href="#u0036" x="869" y="316"/><use href="#u0038" x="875" y="316"/><use href="#u0032" x="568" y="335"/><use href="#u0035" x="574" y="335"/><use href="#sl" x="580" y="335"/><use href="#u0030" x="586" y="335"/><use href="#u0031" x="592" y="335"/><use href="#sl" x="598" y="335"/><use href="#u0032" x="604" y="335"/><use href="#u0030" x="610" y="335"/><use href="#u0032" x="684" y="335"/><use href="#cm" x="690" y="335"/><use href="#u0038" x="694" y="335"/><use href="#u0037" x="700" y="335"/><use href="#u0032" x="706" y="335"/><use href="#u0032" x="769" y="335"/><use href="#cm" x="775" y="335"/><use href="#u0038" x="779" y="335"/><use href="#u0036" x="785" y="335"/><use href="#u0038" x="791" y="335"/><use href="#u0032" x="853" y="335"/><use href="#cm" x="859" y="335"/><use href="#u0038" x="863" y="335"/><use href="#u0031" x="869" y="335"/><use href="#u0033" x="875" y="335"/><use href="#u0032" x="568" y="354"/><use href="#u0035" x="574" y="354"/><use href="#sl" x="580" y="354"/><use href="#u0030" x="586" y="354"/><use href="#u0031" x="592" y="354"/><use href="#sl" x="598" y="354"/><use href="#u0031" x="604" y="354"/><use href="#u0037" x="610" y="354"/><use href="#u0032" x="684" y="354"/><use href="#cm" x="690" y="354"/><use href="#u0037" x="694" y="354"/><use href="#u0039" x="700" y="354"/><use href="#u0036" x="706" y="354"/><use href="#u0032" x="769" y="354"/><use href="#cm" x="775" y="354"/><use href="#u0038" x="779" y="354"/><use href="#u0031" x="785" y="354"/><use href="#u0033" x="791" y="354"/><use href="#u0032" x="853" y="354"/><use href="#cm" x="859" y="354"/><use href="#u0038" x="863" y="354"/><use href="#u0030" x="869" y="354"/><use href="#u0032" x="875" y="354"/><use href="#u0032" x="568" y="373"/><use href="#u0035" x="574" y="373"/><use href="#sl" x="580" y="373"/><use href="#u0030" x="586" y="373"/><use href="#u0031" x="592" y="373"/><use href="#sl" x="598" y="373"/><use href="#u0031" x="604" y="373"/><use href="#u0036" x="610" y="373"/><use href="#u0032" x="684" y="373"/><use href="#cm" x="690" y="373"/><use href="#u0038" x="694" y="373"/><use href="#u0030" x="700" y="373"/><use href="#u0031" x="706" y="373"/><use href="#u0032" x="769" y="373"/><use href="#cm" x="775" y="373"/><use href="#u0038" x="779" y="373"/><use href="#u0030" x="785" y="373"/><use href="#u0032" x="791" y="373"/><use href="#u0032" x="853" y="373"/><use href="#cm" x="859" y="373"/><use href="#u0038" x="863" y="373"/><use href="#u0036" x="869" y="373"/><use href="#u0030" x="875" y="373"/><use href="#u0032" x="568" y="392"/><use href="#u0035" x="574" y="392"/><use href="#sl" x="580" y="392"/><use href="#u0030" x="586" y="392"/><use href="#u0031" x="592" y="392"/><use href="#sl" x="598" y="392"/><use href="#u0031" x="604" y="392"/><use href="#u0035" x="610" y="392"/><use href="#u0032" x="684" y="392"/><use href="#cm" x="690" y="392"/><use href="#u0038" x="694" y="392"/><use href="#u0035" x="700" y="392"/><use href="#u0036" x="706" y="392"/><use href="#u0032" x="769" y="392"/><use href="#cm" x="775" y="392"/><use href="#u0038" x="779" y="392"/><use href="#u0036" x="785" y="392"/><use href="#u0030" x="791" y="392"/><use href="#u0032" x="853" y="392"/><use href="#cm" x="859" y="392"/><use href="#u0038" x="863" y="392"/><use href="#u0034" x="869" y="392"/><use href="#u0031" x="875" y="392"/><use href="#u0032" x="568" y="411"/><use href="#u0035" x="574" y="411"/><use href="#sl" x="580" y="411"/><use href="#u0030" x="586" y="411"/><use href="#u0031" x="592" y="411"/><use href="#sl" x="598" y="411"/><use href="#u0031" x="604" y="411"/><use href="#u0034" x="610" y="411"/><use href="#u0032" x="684" y="411"/><use href="#cm" x="690" y="411"/><use href="#u0038" x="694" y="411"/><use href="#u0036" x="700" y="411"/><use href="#u0036" x="706" y="411"/><use href="#u0032" x="769" y="411"/><use href="#cm" x="775" y="411"/><use href="#u0038" x="779" y="411"/><use href="#u0034" x="785" y="411"/><use href="#u0031" x="791" y="411"/><use href="#u0032" x="853" y="411"/><use href="#cm" x="859" y="411"/><use href="#u0038" x="863" y="411"/><use href="#u0037" x="869" y="411"/><use href="#u0031" x="875" y="411"/><use href="#u0032" x="568" y="430"/><use href="#u0035" x="574" y="430"/><use href="#sl" x="580" y="430"/><use href="#u0030" x="586" y="430"/><use href="#u0031" x="592" y="430"/><use href="#sl" x="598" y="430"/><use href="#u0031" x="604" y="430"/><use href="#u0033" x="610" y="430"/><use href="#u0032" x="684" y="430"/><use href="#cm" x="690" y="430"/><use href="#u0038" x="694" y="430"/><use href="#u0038" x="700" y="430"/><use href="#u0031" x="706" y="430"/><use href="#u0032" x="769" y="430"/><use href="#cm" x="775" y="430"/><use href="#u0038" x="779" y="430"/><use href="#u0037" x="785" y="430"/><use href="#u0031" x="791" y="430"/><use href="#u0032" x="853" y="430"/><use href="#cm" x="859" y="430"/><use href="#u0038" x="863" y="430"/><use href="#u0033" x="869" y="430"/><use href="#u0037" x="875" y="430"/></g><g fill="#d80000"><use href="#uad6d" x="7" y="222"/><use href="#uace0" x="19" y="222"/><use href="#u0033" x="31" y="222"/><use href="#u0059" x="37" y="222"/></g><g fill="#ff00ff"><use href="#uad6d" x="49" y="222"/><use href="#uace0" x="61" y="222"/><use href="#u0035" x="73" y="222"/><use href="#u0059" x="79" y="222"/></g><g fill="#000080"><use href="#uad6d" x="91" y="222"/><use href="#uace0" x="103" y="222"/><use href="#u0031" x="115" y="222"/><use href="#u0030" x="121" y="222"/><use href="#u0059" x="127" y="222"/></g><g fill="#e00000"><use href="#u0030" x="941" y="259"/><use href="#cm" x="947" y="259"/><use href="#u0030" x="951" y="259"/><use href="#u0032" x="957" y="259"/><use href="#u0032" x="963" y="259"/><use href="#u0030" x="941" y="278"/><use href="#cm" x="947" y="278"/><use href="#u0030" x="951" y="278"/><use href="#u0031" x="957" y="278"/><use href="#u0030" x="963" y="278"/><use href="#u0030" x="941" y="297"/><use href="#cm" x="947" y="297"/><use href="#u0030" x="951" y="297"/><use href="#u0030" x="957" y="297"/><use href="#u0039" x="963" y="297"/><use href="#u0030" x="941" y="335"/><use href="#cm" x="947" y="335"/><use href="#u0030" x="951" y="335"/><use href="#u0035" x="957" y="335"/><use href="#u0035" x="963" y="335"/><use href="#u0030" x="941" y="354"/><use href="#cm" x="947" y="354"/><use href="#u0030" x="951" y="354"/><use href="#u0031" x="957" y="354"/><use href="#u0031" x="963" y="354"/><use href="#u0030" x="941" y="392"/><use href="#cm" x="947" y="392"/><use href="#u0030" x="951" y="392"/><use href="#u0031" x="957" y="392"/><use href="#u0039" x="963" y="392"/><use href="#u0030" x="941" y="430"/><use href="#cm" x="947" y="430"/><use href="#u0030" x="951" y="430"/><use href="#u0033" x="957" y="430"/><use href="#u0034" x="963" y="430"/></g><g fill="#0000d0"><use href="#dash" x="935" y="316"/><use href="#u0030" x="941" y="316"/><use href="#cm" x="947" y="316"/><use href="#u0030" x="951" y="316"/><use href="#u0035" x="957" y="316"/><use href="#u0030" x="963" y="316"/><use href="#dash" x="935" y="373"/><use href="#u0030" x="941" y="373"/><use href="#cm" x="947" y="373"/><use href="#u0030" x="951" y="373"/><use href="#u0035" x="957" y="373"/><use href="#u0038" x="963" y="373"/><use href="#dash" x="935" y="411"/><use href="#u0030" x="941" y="411"/><use href="#cm" x="947" y="411"/><use href="#u0030" x="951" y="411"/><use href="#u0033" x="957" y="411"/><use href="#u0030" x="963" y="411"/></g>
</svg>
<div id="t"><span style="left:20px;top:13px">일</span><span style="left:40px;top:13px">자</span><span style="left:74px;top:4px">국고1Y</span><span style="left:124px;top:4px">국고2Y</span><span style="left:174px;top:4px">국고3Y</span><span style="left:224px;top:4px">국고5Y</span><span style="left:271px;top:4px">국고10Y</span><span style="left:321px;top:4px">국고20Y</span><span style="left:371px;top:4px">국고30Y</span><span style="left:421px;top:4px">국고50Y</span><span style="left:472px;top:4px">국주1종</span><span style="left:526px;top:4px">통안91</span><span style="left:574px;top:4px">통안1Y</span><span style="left:624px;top:4px">통안2Y</span><span style="left:674px;top:4px">한전3Y</span><span style="left:724px;top:4px">산금1Y</span><span style="left:770px;top:4px">회사AA-</span><span style="left:819px;top:4px">회사BBB-</span><span style="left:890px;top:4px">CD</span><span style="left:930px;top:4px">CP91D</span><span style="left:12px;top:41px">25/02/03</span><span style="left:108px;top:41px">-</span><span style="left:158px;top:41px">-</span><span style="left:208px;top:41px">-</span><span style="left:258px;top:41px">-</span><span style="left:308px;top:41px">-</span><span style="left:358px;top:41px">-</span><span style="left:408px;top:41px">-</span><span style="left:458px;top:41px">-</span><span style="left:508px;top:41px">-</span><span style="left:558px;top:41px">-</span><span style="left:608px;top:41px">-</span><span style="left:658px;top:41px">-</span><span style="left:708px;top:41px">-</span><span style="left:758px;top:41px">-</span><span style="left:808px;top:41px">-</span><span style="left:863px;top:41px">-</span><span style="left:913px;top:41px">-</span><span style="left:963px;top:41px">-</span><span style="left:12px;top:60px">25/01/31</span><span style="left:86px;top:60px">2,631</span><span style="left:136px;top:60px">2,644</span><span style="left:186px;top:60px">2,573</span><span style="left:236px;top:60px">2,701</span><span style="left:286px;top:60px">2,859</span><span style="left:336px;top:60px">2,790</span><span style="left:386px;top:60px">2,743</span><span style="left:436px;top:60px">2,635</span><span style="left:486px;top:60px">2,859</span><span style="left:536px;top:60px">2,873</span><span style="left:586px;top:60px">2,645</span><span style="left:636px;top:60px">2,624</span><span style="left:686px;top:60px">2,861</span><span style="left:736px;top:60px">2,812</span><span style="left:786px;top:60px">3,204</span><span style="left:841px;top:60px">8,963</span><span style="left:891px;top:60px">3,030</span><span style="left:941px;top:60px">3,220</span><span style="left:12px;top:79px">25/01/24</span><span style="left:86px;top:79px">2,627</span><span style="left:136px;top:79px">2,655</span><span style="left:186px;top:79px">2,570</span><span style="left:236px;top:79px">2,704</span><span style="left:286px;top:79px">2,859</span><span style="left:336px;top:79px">2,798</span><span style="left:386px;top:79px">2,736</span><span style="left:436px;top:79px">2,630</span><span style="left:486px;top:79px">2,856</span><span style="left:536px;top:79px">2,872</span><span style="left:586px;top:79px">2,639</span><span style="left:636px;top:79px">2,620</span><span style="left:686px;top:79px">2,863</span><span style="left:736px;top:79px">2,806</span><span style="left:786px;top:79px">3,210</span><span style="left:841px;top:79px">8,968</span><span style="left:891px;top:79px">3,030</span><span style="left:941px;top:79px">3,220</span><span style="left:12px;top:98px">25/01/23</span><span style="left:86px;top:98px">2,632</span><span style="left:136px;top:98px">2,663</span><span style="left:186px;top:98px">2,578</span><span style="left:236px;top:98px">2,695</span><span style="left:286px;top:98px">2,837</span><span style="left:336px;top:98px">2,781</span><span style="left:386px;top:98px">2,716</span><span style="left:436px;top:98px">2,612</span><span style="left:486px;top:98px">2,845</span><span style="left:536px;top:98px">2,877</span><span style="left:586px;top:98px">2,638</span><span style="left:636px;top:98px">2,638</span><span style="left:686px;top:98px">2,873</span><span style="left:736px;top:98px">2,809</span><span style="left:786px;top:98px">3,218</span><span style="left:841px;top:98px">8,978</span><span style="left:891px;top:98px">3,030</span><span style="left:941px;top:98px">3,230</span><span style="left:12px;top:117px">25/01/22</span><span style="left:86px;top:117px">2,624</span><span style="left:136px;top:117px">2,646</span><span style="left:186px;top:117px">2,577</span><span style="left:236px;top:117px">2,690</span><span style="left:286px;top:117px">2,827</span><span style="left:336px;top:117px">2,734</span><span style="left:386px;top:117px">2,682</span><span style="left:436px;top:117px">2,580</span><span style="left:486px;top:117px">2,822</span><span style="left:536px;top:117px">2,874</span><span style="left:586px;top:117px">2,625</span><span style="left:636px;top:117px">2,634</span><span style="left:686px;top:117px">2,873</span><span style="left:736px;top:117px">2,799</span><span style="left:786px;top:117px">3,227</span><span style="left:841px;top:117px">8,986</span><span style="left:891px;top:117px">3,030</span><span style="left:941px;top:117px">3,240</span><span style="left:12px;top:136px">25/01/21</span><span style="left:86px;top:136px">2,616</span><span style="left:136px;top:136px">2,651</span><span style="left:186px;top:136px">2,579</span><span style="left:236px;top:136px">2,678</span><span style="left:286px;top:136px">2,818</span><span style="left:336px;top:136px">2,721</span><span style="left:386px;top:136px">2,680</span><span style="left:436px;top:136px">2,576</span><span style="left:486px;top:136px">2,800</span><span style="left:536px;top:136px">2,873</span><span style="left:586px;top:136px">2,612</span><span style="left:636px;top:136px">2,615</span><span style="left:686px;top:136px">2,874</span><span style="left:736px;top:136px">2,785</span><span style="left:786px;top:136px">3,227</span><span style="left:841px;top:136px">8,986</span><span style="left:891px;top:136px">2,980</span><span style="left:941px;top:136px">3,240</span><span style="left:12px;top:155px">25/01/20</span><span style="left:86px;top:155px">2,628</span><span style="left:136px;top:155px">2,662</span><span style="left:186px;top:155px">2,623</span><span style="left:236px;top:155px">2,715</span><span style="left:286px;top:155px">2,868</span><span style="left:336px;top:155px">2,741</span><span style="left:386px;top:155px">2,684</span><span style="left:436px;top:155px">2,578</span><span style="left:486px;top:155px">2,837</span><span style="left:536px;top:155px">2,874</span><span style="left:586px;top:155px">2,621</span><span style="left:636px;top:155px">2,624</span><span style="left:686px;top:155px">2,916</span><span style="left:736px;top:155px">2,797</span><span style="left:786px;top:155px">3,268</span><span style="left:841px;top:155px">9,027</span><span style="left:891px;top:155px">2,990</span><span style="left:941px;top:155px">3,250</span><span style="left:12px;top:174px">25/01/17</span><span style="left:86px;top:174px">2,618</span><span style="left:136px;top:174px">2,651</span><span style="left:186px;top:174px">2,588</span><span style="left:236px;top:174px">2,688</span><span style="left:286px;top:174px">2,813</span><span style="left:336px;top:174px">2,715</span><span style="left:386px;top:174px">2,670</span><span style="left:436px;top:174px">2,566</span><span style="left:486px;top:174px">2,815</span><span style="left:536px;top:174px">2,873</span><span style="left:586px;top:174px">2,606</span><span style="left:636px;top:174px">2,596</span><span style="left:686px;top:174px">2,900</span><span style="left:736px;top:174px">2,784</span><span style="left:786px;top:174px">3,241</span><span style="left:841px;top:174px">8,998</span><span style="left:891px;top:174px">2,990</span><span style="left:941px;top:174px">3,280</span><span style="left:12px;top:193px">25/01/16</span><span style="left:86px;top:193px">2,631</span><span style="left:136px;top:193px">2,678</span><span style="left:186px;top:193px">2,626</span><span style="left:236px;top:193px">2,723</span><span style="left:286px;top:193px">2,802</span><span style="left:336px;top:193px">2,717</span><span style="left:386px;top:193px">2,671</span><span style="left:436px;top:193px">2,564</span><span style="left:486px;top:193px">2,857</span><span style="left:536px;top:193px">2,879</span><span style="left:586px;top:193px">2,619</span><span style="left:636px;top:193px">2,625</span><span style="left:686px;top:193px">2,936</span><span style="left:736px;top:193px">2,797</span><span style="left:786px;top:193px">3,276</span><span style="left:841px;top:193px">9,033</span><span style="left:891px;top:193px">2,990</span><span style="left:941px;top:193px">3,290</span><span style="left:505px;top:250px">3,100</span><span style="left:505px;top:275px">3,000</span><span style="left:505px;top:300px">2,900</span><span style="left:505px;top:324px">2,800</span><span style="left:505px;top:349px">2,700</span><span style="left:505px;top:374px">2,600</span><span style="left:505px;top:399px">2,500</span><span style="left:15px;top:430px">11</span><span style="left:63px;top:430px">11/12</span><span style="left:111px;top:430px">11/20</span><span style="left:175px;top:430px">12</span><span style="left:207px;top:430px">12/06</span><span style="left:255px;top:430px">12/16</span><span style="left:343px;top:430px">2025</span><span style="left:375px;top:430px">01/08</span><span style="left:423px;top:430px">01/16</span><span style="left:489px;top:430px">02/03</span><span style="left:7px;top:220px">국고3Y</span><span style="left:49px;top:220px">국고5Y</span><span style="left:91px;top:220px">국고10Y</span><span style="left:563px;top:219px">국고10Y</span><span style="left:654px;top:220px">11시30분</span><span style="left:739px;top:220px">16시00분</span><span style="left:835px;top:220px">전기</span><span style="left:907px;top:220px">전기대비</span><span style="left:568px;top:238px">25/01/31</span><span style="left:684px;top:238px">2,826</span><span style="left:769px;top:238px">2,859</span><span style="left:853px;top:238px">2,859</span><span style="left:963px;top:238px">-</span><span style="left:568px;top:257px">25/01/24</span><span style="left:684px;top:257px">2,834</span><span style="left:769px;top:257px">2,859</span><span style="left:853px;top:257px">2,837</span><span style="left:941px;top:257px">0,022</span><span style="left:568px;top:276px">25/01/23</span><span style="left:684px;top:276px">2,838</span><span style="left:769px;top:276px">2,837</span><span style="left:853px;top:276px">2,827</span><span style="left:941px;top:276px">0,010</span><span style="left:568px;top:295px">25/01/22</span><span style="left:684px;top:295px">2,829</span><span style="left:769px;top:295px">2,827</span><span style="left:853px;top:295px">2,818</span><span style="left:941px;top:295px">0,009</span><span style="left:568px;top:314px">25/01/21</span><span style="left:684px;top:314px">2,829</span><span style="left:769px;top:314px">2,818</span><span style="left:853px;top:314px">2,868</span><span style="left:935px;top:314px">-0,050</span><span style="left:568px;top:333px">25/01/20</span><span style="left:684px;top:333px">2,872</span><span style="left:769px;top:333px">2,868</span><span style="left:853px;top:333px">2,813</span><span style="left:941px;top:333px">0,055</span><span style="left:568px;top:352px">25/01/17</span><span style="left:684px;top:352px">2,796</span><span style="left:769px;top:352px">2,813</span><span style="left:853px;top:352px">2,802</span><span style="left:941px;top:352px">0,011</span><span style="left:568px;top:371px">25/01/16</span><span style="left:684px;top:371px">2,801</span><span style="left:769px;top:371px">2,802</span><span style="left:853px;top:371px">2,860</span><span style="left:935px;top:371px">-0,058</span><span style="left:568px;top:390px">25/01/15</span><span style="left:684px;top:390px">2,856</span><span style="left:769px;top:390px">2,860</span><span style="left:853px;top:390px">2,841</span><span style="left:941px;top:390px">0,019</span><span style="left:568px;top:409px">25/01/14</span><span style="left:684px;top:409px">2,866</span><span style="left:769px;top:409px">2,841</span><span style="left:853px;top:409px">2,871</span><span style="left:935px;top:409px">-0,030</span><span style="left:568px;top:428px">25/01/13</span><span style="left:684px;top:428px">2,881</span><span style="left:769px;top:428px">2,871</span><span style="left:853px;top:428px">2,837</span><span style="left:941px;top:428px">0,034</span></div>
</body></html>
